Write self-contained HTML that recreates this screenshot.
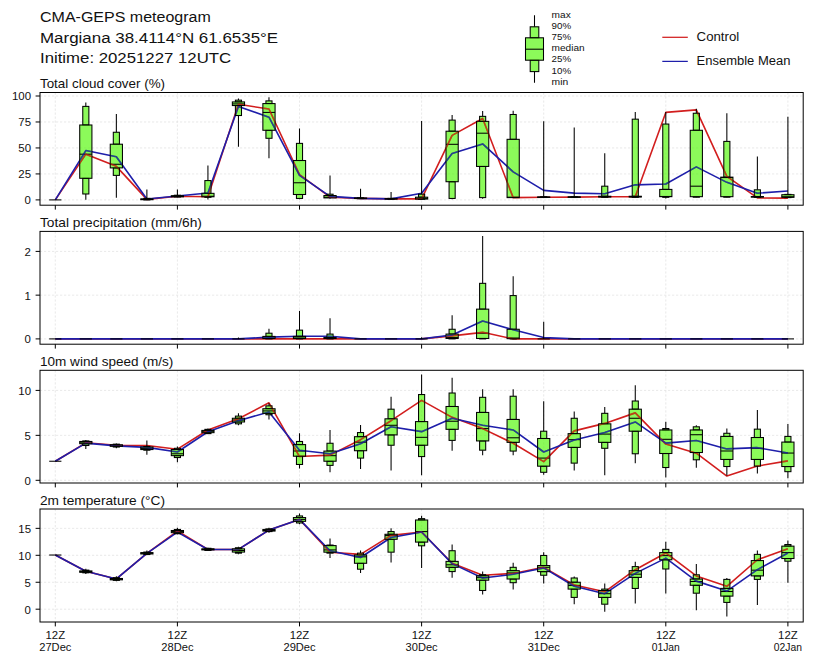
<!DOCTYPE html><html><head><meta charset="utf-8"><title>CMA-GEPS meteogram</title><style>html,body{margin:0;padding:0;background:#fff;width:814px;height:664px;overflow:hidden}svg{display:block}text{font-family:"Liberation Sans",sans-serif}</style></head><body>
<svg width="814" height="664" viewBox="0 0 814 664">
<rect width="814" height="664" fill="#fff"/>
<text x="40.00" y="22.40" font-size="15.47" textLength="170.79" lengthAdjust="spacingAndGlyphs" fill="#111">CMA-GEPS meteogram</text>
<text x="40.00" y="42.70" font-size="15.47" textLength="238.11" lengthAdjust="spacingAndGlyphs" fill="#111">Margiana 38.4114°N 61.6535°E</text>
<text x="40.00" y="63.00" font-size="15.47" textLength="191.11" lengthAdjust="spacingAndGlyphs" fill="#111">Initime: 20251227 12UTC</text>
<path d="M534.50 15.20V26.80M534.50 71.60V82.80" stroke="#000" stroke-opacity="1.0" stroke-width="1.05" fill="none"/><rect x="530.20" y="26.80" width="8.60" height="11.00" fill="#4ef802" fill-opacity="0.65" stroke="#000" stroke-opacity="1.0" stroke-width="1.05"/><rect x="530.20" y="60.20" width="8.60" height="11.40" fill="#4ef802" fill-opacity="0.65" stroke="#000" stroke-opacity="1.0" stroke-width="1.05"/><rect x="525.50" y="37.80" width="18.00" height="22.40" fill="#4ef802" fill-opacity="0.65" stroke="#000" stroke-opacity="1.0" stroke-width="1.05"/><path d="M525.50 49.20H543.50" stroke="#000" stroke-opacity="1.0" stroke-width="1.05"/>
<text x="551.60" y="17.90" font-size="9.11" textLength="19.14" lengthAdjust="spacingAndGlyphs" fill="#111">max</text>
<text x="551.60" y="29.02" font-size="9.11" textLength="19.56" lengthAdjust="spacingAndGlyphs" fill="#111">90%</text>
<text x="551.60" y="40.14" font-size="9.11" textLength="19.56" lengthAdjust="spacingAndGlyphs" fill="#111">75%</text>
<text x="551.60" y="51.26" font-size="9.11" textLength="33.00" lengthAdjust="spacingAndGlyphs" fill="#111">median</text>
<text x="551.60" y="62.38" font-size="9.11" textLength="19.56" lengthAdjust="spacingAndGlyphs" fill="#111">25%</text>
<text x="551.60" y="73.50" font-size="9.11" textLength="19.56" lengthAdjust="spacingAndGlyphs" fill="#111">10%</text>
<text x="551.60" y="84.62" font-size="9.11" textLength="16.62" lengthAdjust="spacingAndGlyphs" fill="#111">min</text>
<line x1="662.3" y1="37.3" x2="687.8" y2="37.3" stroke="#d21e1e" stroke-width="1.25"/>
<line x1="662.3" y1="61.4" x2="687.8" y2="61.4" stroke="#1e1eaa" stroke-width="1.25"/>
<text x="696.60" y="41.30" font-size="12.21" textLength="42.63" lengthAdjust="spacingAndGlyphs" fill="#111">Control</text>
<text x="696.60" y="65.30" font-size="12.21" textLength="93.76" lengthAdjust="spacingAndGlyphs" fill="#111">Ensemble Mean</text>
<g>
<g stroke="#e0e0e0" stroke-width="0.7" stroke-dasharray="2.2,1.8" fill="none">
<line x1="40.0" y1="199.90" x2="803.2" y2="199.90"/>
<line x1="40.0" y1="173.93" x2="803.2" y2="173.93"/>
<line x1="40.0" y1="147.95" x2="803.2" y2="147.95"/>
<line x1="40.0" y1="121.98" x2="803.2" y2="121.98"/>
<line x1="40.0" y1="96.00" x2="803.2" y2="96.00"/>
<line x1="55.30" y1="92.5" x2="55.30" y2="205.2"/>
<line x1="177.40" y1="92.5" x2="177.40" y2="205.2"/>
<line x1="299.50" y1="92.5" x2="299.50" y2="205.2"/>
<line x1="421.60" y1="92.5" x2="421.60" y2="205.2"/>
<line x1="543.70" y1="92.5" x2="543.70" y2="205.2"/>
<line x1="665.80" y1="92.5" x2="665.80" y2="205.2"/>
<line x1="787.90" y1="92.5" x2="787.90" y2="205.2"/>
</g>
<polyline points="55.30,199.90 85.82,154.18 116.35,166.34 146.88,199.38 177.40,196.26 207.93,196.78 238.45,104.31 268.97,108.99 299.50,174.65 330.02,197.20 360.55,198.34 391.07,198.86 421.60,198.86 452.12,135.38 482.65,118.44 513.17,197.61 543.70,197.20 574.22,197.09 604.75,196.68 635.27,196.68 665.80,112.42 696.32,109.92 726.85,176.31 757.37,197.93 787.90,198.13" fill="none" stroke="#d21e1e" stroke-opacity="1.0" stroke-width="1.6" stroke-linejoin="round"/>
<polyline points="55.30,199.90 85.82,150.55 116.35,156.68 146.88,199.07 177.40,195.95 207.93,193.04 238.45,106.49 268.97,117.20 299.50,175.38 330.02,196.37 360.55,198.34 391.07,198.86 421.60,193.25 452.12,153.56 482.65,143.90 513.17,171.85 543.70,190.34 574.22,193.15 604.75,193.77 635.27,184.83 665.80,184.00 696.32,166.86 726.85,182.34 757.37,193.25 787.90,191.07" fill="none" stroke="#1e1eaa" stroke-opacity="1.0" stroke-width="1.6" stroke-linejoin="round"/>
<path d="M55.30 199.90V199.90M55.30 199.90V199.90" stroke="#000" stroke-opacity="1.0" stroke-width="1.05" fill="none"/><rect x="52.25" y="199.90" width="6.10" height="0.00" fill="#4ef802" fill-opacity="0.65" stroke="#000" stroke-opacity="1.0" stroke-width="1.05"/><rect x="52.25" y="199.90" width="6.10" height="0.00" fill="#4ef802" fill-opacity="0.65" stroke="#000" stroke-opacity="1.0" stroke-width="1.05"/><rect x="49.20" y="199.90" width="12.20" height="0.00" fill="#4ef802" fill-opacity="0.65" stroke="#000" stroke-opacity="1.0" stroke-width="1.05"/><path d="M49.20 199.90H61.40" stroke="#000" stroke-opacity="1.0" stroke-width="1.05"/>
<path d="M85.82 102.55V106.39M85.82 193.98V199.80" stroke="#000" stroke-opacity="1.0" stroke-width="1.05" fill="none"/><rect x="82.77" y="106.39" width="6.10" height="18.60" fill="#4ef802" fill-opacity="0.65" stroke="#000" stroke-opacity="1.0" stroke-width="1.05"/><rect x="82.77" y="178.29" width="6.10" height="15.69" fill="#4ef802" fill-opacity="0.65" stroke="#000" stroke-opacity="1.0" stroke-width="1.05"/><rect x="79.72" y="124.99" width="12.20" height="53.30" fill="#4ef802" fill-opacity="0.65" stroke="#000" stroke-opacity="1.0" stroke-width="1.05"/><path d="M79.72 154.18H91.92" stroke="#000" stroke-opacity="1.0" stroke-width="1.05"/>
<path d="M116.35 114.08V132.26M116.35 175.38V197.82" stroke="#000" stroke-opacity="1.0" stroke-width="1.05" fill="none"/><rect x="113.30" y="132.26" width="6.10" height="11.95" fill="#4ef802" fill-opacity="0.65" stroke="#000" stroke-opacity="1.0" stroke-width="1.05"/><rect x="113.30" y="167.90" width="6.10" height="7.48" fill="#4ef802" fill-opacity="0.65" stroke="#000" stroke-opacity="1.0" stroke-width="1.05"/><rect x="110.25" y="144.21" width="12.20" height="23.69" fill="#4ef802" fill-opacity="0.65" stroke="#000" stroke-opacity="1.0" stroke-width="1.05"/><path d="M110.25 164.26H122.45" stroke="#000" stroke-opacity="1.0" stroke-width="1.05"/>
<path d="M146.88 189.41V198.34M146.88 199.90V199.90" stroke="#000" stroke-opacity="1.0" stroke-width="1.05" fill="none"/><rect x="143.82" y="198.34" width="6.10" height="0.52" fill="#4ef802" fill-opacity="0.65" stroke="#000" stroke-opacity="1.0" stroke-width="1.05"/><rect x="143.82" y="199.69" width="6.10" height="0.21" fill="#4ef802" fill-opacity="0.65" stroke="#000" stroke-opacity="1.0" stroke-width="1.05"/><rect x="140.78" y="198.86" width="12.20" height="0.83" fill="#4ef802" fill-opacity="0.65" stroke="#000" stroke-opacity="1.0" stroke-width="1.05"/><path d="M140.78 199.38H152.97" stroke="#000" stroke-opacity="1.0" stroke-width="1.05"/>
<path d="M177.40 189.51V195.22M177.40 196.99V197.30" stroke="#000" stroke-opacity="1.0" stroke-width="1.05" fill="none"/><rect x="174.35" y="195.22" width="6.10" height="0.52" fill="#4ef802" fill-opacity="0.65" stroke="#000" stroke-opacity="1.0" stroke-width="1.05"/><rect x="174.35" y="196.78" width="6.10" height="0.21" fill="#4ef802" fill-opacity="0.65" stroke="#000" stroke-opacity="1.0" stroke-width="1.05"/><rect x="171.30" y="195.74" width="12.20" height="1.04" fill="#4ef802" fill-opacity="0.65" stroke="#000" stroke-opacity="1.0" stroke-width="1.05"/><path d="M171.30 196.26H183.50" stroke="#000" stroke-opacity="1.0" stroke-width="1.05"/>
<path d="M207.93 165.51V180.57M207.93 197.30V199.38" stroke="#000" stroke-opacity="1.0" stroke-width="1.05" fill="none"/><rect x="204.88" y="180.57" width="6.10" height="12.78" fill="#4ef802" fill-opacity="0.65" stroke="#000" stroke-opacity="1.0" stroke-width="1.05"/><rect x="204.88" y="196.78" width="6.10" height="0.52" fill="#4ef802" fill-opacity="0.65" stroke="#000" stroke-opacity="1.0" stroke-width="1.05"/><rect x="201.83" y="193.35" width="12.20" height="3.43" fill="#4ef802" fill-opacity="0.65" stroke="#000" stroke-opacity="1.0" stroke-width="1.05"/><path d="M201.83 196.26H214.03" stroke="#000" stroke-opacity="1.0" stroke-width="1.05"/>
<path d="M238.45 98.49V100.16M238.45 115.53V146.81" stroke="#000" stroke-opacity="1.0" stroke-width="1.05" fill="none"/><rect x="235.40" y="100.16" width="6.10" height="1.77" fill="#4ef802" fill-opacity="0.65" stroke="#000" stroke-opacity="1.0" stroke-width="1.05"/><rect x="235.40" y="105.56" width="6.10" height="9.97" fill="#4ef802" fill-opacity="0.65" stroke="#000" stroke-opacity="1.0" stroke-width="1.05"/><rect x="232.35" y="101.92" width="12.20" height="3.64" fill="#4ef802" fill-opacity="0.65" stroke="#000" stroke-opacity="1.0" stroke-width="1.05"/><path d="M232.35 103.90H244.55" stroke="#000" stroke-opacity="1.0" stroke-width="1.05"/>
<path d="M268.97 97.14V100.88M268.97 138.29V158.13" stroke="#000" stroke-opacity="1.0" stroke-width="1.05" fill="none"/><rect x="265.92" y="100.88" width="6.10" height="2.70" fill="#4ef802" fill-opacity="0.65" stroke="#000" stroke-opacity="1.0" stroke-width="1.05"/><rect x="265.92" y="130.29" width="6.10" height="8.00" fill="#4ef802" fill-opacity="0.65" stroke="#000" stroke-opacity="1.0" stroke-width="1.05"/><rect x="262.87" y="103.58" width="12.20" height="26.70" fill="#4ef802" fill-opacity="0.65" stroke="#000" stroke-opacity="1.0" stroke-width="1.05"/><path d="M262.87 112.42H275.07" stroke="#000" stroke-opacity="1.0" stroke-width="1.05"/>
<path d="M299.50 128.62V143.38M299.50 198.45V199.28" stroke="#000" stroke-opacity="1.0" stroke-width="1.05" fill="none"/><rect x="296.45" y="143.38" width="6.10" height="17.14" fill="#4ef802" fill-opacity="0.65" stroke="#000" stroke-opacity="1.0" stroke-width="1.05"/><rect x="296.45" y="194.50" width="6.10" height="3.95" fill="#4ef802" fill-opacity="0.65" stroke="#000" stroke-opacity="1.0" stroke-width="1.05"/><rect x="293.40" y="160.52" width="12.20" height="33.98" fill="#4ef802" fill-opacity="0.65" stroke="#000" stroke-opacity="1.0" stroke-width="1.05"/><path d="M293.40 182.76H305.60" stroke="#000" stroke-opacity="1.0" stroke-width="1.05"/>
<path d="M330.02 175.38V194.19M330.02 197.93V198.86" stroke="#000" stroke-opacity="1.0" stroke-width="1.05" fill="none"/><rect x="326.97" y="194.19" width="6.10" height="1.35" fill="#4ef802" fill-opacity="0.65" stroke="#000" stroke-opacity="1.0" stroke-width="1.05"/><rect x="326.97" y="197.93" width="6.10" height="0.00" fill="#4ef802" fill-opacity="0.65" stroke="#000" stroke-opacity="1.0" stroke-width="1.05"/><rect x="323.92" y="195.54" width="12.20" height="2.39" fill="#4ef802" fill-opacity="0.65" stroke="#000" stroke-opacity="1.0" stroke-width="1.05"/><path d="M323.92 197.30H336.12" stroke="#000" stroke-opacity="1.0" stroke-width="1.05"/>
<path d="M360.55 188.68V197.82M360.55 198.65V198.86" stroke="#000" stroke-opacity="1.0" stroke-width="1.05" fill="none"/><rect x="357.50" y="197.82" width="6.10" height="0.21" fill="#4ef802" fill-opacity="0.65" stroke="#000" stroke-opacity="1.0" stroke-width="1.05"/><rect x="357.50" y="198.55" width="6.10" height="0.10" fill="#4ef802" fill-opacity="0.65" stroke="#000" stroke-opacity="1.0" stroke-width="1.05"/><rect x="354.45" y="198.03" width="12.20" height="0.52" fill="#4ef802" fill-opacity="0.65" stroke="#000" stroke-opacity="1.0" stroke-width="1.05"/><path d="M354.45 198.34H366.65" stroke="#000" stroke-opacity="1.0" stroke-width="1.05"/>
<path d="M391.07 192.11V198.34M391.07 199.07V199.38" stroke="#000" stroke-opacity="1.0" stroke-width="1.05" fill="none"/><rect x="388.02" y="198.34" width="6.10" height="0.31" fill="#4ef802" fill-opacity="0.65" stroke="#000" stroke-opacity="1.0" stroke-width="1.05"/><rect x="388.02" y="198.96" width="6.10" height="0.10" fill="#4ef802" fill-opacity="0.65" stroke="#000" stroke-opacity="1.0" stroke-width="1.05"/><rect x="384.97" y="198.65" width="12.20" height="0.31" fill="#4ef802" fill-opacity="0.65" stroke="#000" stroke-opacity="1.0" stroke-width="1.05"/><path d="M384.97 198.86H397.18" stroke="#000" stroke-opacity="1.0" stroke-width="1.05"/>
<path d="M421.60 121.04V194.19M421.60 199.28V199.28" stroke="#000" stroke-opacity="1.0" stroke-width="1.05" fill="none"/><rect x="418.55" y="194.19" width="6.10" height="3.01" fill="#4ef802" fill-opacity="0.65" stroke="#000" stroke-opacity="1.0" stroke-width="1.05"/><rect x="418.55" y="199.07" width="6.10" height="0.21" fill="#4ef802" fill-opacity="0.65" stroke="#000" stroke-opacity="1.0" stroke-width="1.05"/><rect x="415.50" y="197.20" width="12.20" height="1.87" fill="#4ef802" fill-opacity="0.65" stroke="#000" stroke-opacity="1.0" stroke-width="1.05"/><path d="M415.50 198.34H427.70" stroke="#000" stroke-opacity="1.0" stroke-width="1.05"/>
<path d="M452.12 115.01V120.10M452.12 198.45V199.28" stroke="#000" stroke-opacity="1.0" stroke-width="1.05" fill="none"/><rect x="449.07" y="120.10" width="6.10" height="11.12" fill="#4ef802" fill-opacity="0.65" stroke="#000" stroke-opacity="1.0" stroke-width="1.05"/><rect x="449.07" y="181.72" width="6.10" height="16.73" fill="#4ef802" fill-opacity="0.65" stroke="#000" stroke-opacity="1.0" stroke-width="1.05"/><rect x="446.02" y="131.22" width="12.20" height="50.50" fill="#4ef802" fill-opacity="0.65" stroke="#000" stroke-opacity="1.0" stroke-width="1.05"/><path d="M446.02 144.31H458.23" stroke="#000" stroke-opacity="1.0" stroke-width="1.05"/>
<path d="M482.65 111.07V116.36M482.65 197.61V198.86" stroke="#000" stroke-opacity="1.0" stroke-width="1.05" fill="none"/><rect x="479.60" y="116.36" width="6.10" height="4.99" fill="#4ef802" fill-opacity="0.65" stroke="#000" stroke-opacity="1.0" stroke-width="1.05"/><rect x="479.60" y="166.44" width="6.10" height="31.17" fill="#4ef802" fill-opacity="0.65" stroke="#000" stroke-opacity="1.0" stroke-width="1.05"/><rect x="476.55" y="121.35" width="12.20" height="45.09" fill="#4ef802" fill-opacity="0.65" stroke="#000" stroke-opacity="1.0" stroke-width="1.05"/><path d="M476.55 133.20H488.75" stroke="#000" stroke-opacity="1.0" stroke-width="1.05"/>
<path d="M513.17 110.65V114.49M513.17 197.61V197.93" stroke="#000" stroke-opacity="1.0" stroke-width="1.05" fill="none"/><rect x="510.12" y="114.49" width="6.10" height="24.83" fill="#4ef802" fill-opacity="0.65" stroke="#000" stroke-opacity="1.0" stroke-width="1.05"/><rect x="510.12" y="197.61" width="6.10" height="0.00" fill="#4ef802" fill-opacity="0.65" stroke="#000" stroke-opacity="1.0" stroke-width="1.05"/><rect x="507.07" y="139.33" width="12.20" height="58.29" fill="#4ef802" fill-opacity="0.65" stroke="#000" stroke-opacity="1.0" stroke-width="1.05"/><path d="M507.07 197.20H519.27" stroke="#000" stroke-opacity="1.0" stroke-width="1.05"/>
<path d="M543.70 121.35V196.78M543.70 197.51V197.82" stroke="#000" stroke-opacity="1.0" stroke-width="1.05" fill="none"/><rect x="540.65" y="196.78" width="6.10" height="0.21" fill="#4ef802" fill-opacity="0.65" stroke="#000" stroke-opacity="1.0" stroke-width="1.05"/><rect x="540.65" y="197.41" width="6.10" height="0.10" fill="#4ef802" fill-opacity="0.65" stroke="#000" stroke-opacity="1.0" stroke-width="1.05"/><rect x="537.60" y="196.99" width="12.20" height="0.42" fill="#4ef802" fill-opacity="0.65" stroke="#000" stroke-opacity="1.0" stroke-width="1.05"/><path d="M537.60 197.20H549.80" stroke="#000" stroke-opacity="1.0" stroke-width="1.05"/>
<path d="M574.22 127.38V196.68M574.22 197.51V197.82" stroke="#000" stroke-opacity="1.0" stroke-width="1.05" fill="none"/><rect x="571.17" y="196.68" width="6.10" height="0.21" fill="#4ef802" fill-opacity="0.65" stroke="#000" stroke-opacity="1.0" stroke-width="1.05"/><rect x="571.17" y="197.30" width="6.10" height="0.21" fill="#4ef802" fill-opacity="0.65" stroke="#000" stroke-opacity="1.0" stroke-width="1.05"/><rect x="568.12" y="196.89" width="12.20" height="0.42" fill="#4ef802" fill-opacity="0.65" stroke="#000" stroke-opacity="1.0" stroke-width="1.05"/><path d="M568.12 197.09H580.32" stroke="#000" stroke-opacity="1.0" stroke-width="1.05"/>
<path d="M604.75 153.25V186.19M604.75 197.30V197.61" stroke="#000" stroke-opacity="1.0" stroke-width="1.05" fill="none"/><rect x="601.70" y="186.19" width="6.10" height="10.08" fill="#4ef802" fill-opacity="0.65" stroke="#000" stroke-opacity="1.0" stroke-width="1.05"/><rect x="601.70" y="196.99" width="6.10" height="0.31" fill="#4ef802" fill-opacity="0.65" stroke="#000" stroke-opacity="1.0" stroke-width="1.05"/><rect x="598.65" y="196.26" width="12.20" height="0.73" fill="#4ef802" fill-opacity="0.65" stroke="#000" stroke-opacity="1.0" stroke-width="1.05"/><path d="M598.65 196.68H610.85" stroke="#000" stroke-opacity="1.0" stroke-width="1.05"/>
<path d="M635.27 112.10V119.17M635.27 197.30V197.61" stroke="#000" stroke-opacity="1.0" stroke-width="1.05" fill="none"/><rect x="632.23" y="119.17" width="6.10" height="77.09" fill="#4ef802" fill-opacity="0.65" stroke="#000" stroke-opacity="1.0" stroke-width="1.05"/><rect x="632.23" y="196.99" width="6.10" height="0.31" fill="#4ef802" fill-opacity="0.65" stroke="#000" stroke-opacity="1.0" stroke-width="1.05"/><rect x="629.17" y="196.26" width="12.20" height="0.73" fill="#4ef802" fill-opacity="0.65" stroke="#000" stroke-opacity="1.0" stroke-width="1.05"/><path d="M629.17 196.68H641.38" stroke="#000" stroke-opacity="1.0" stroke-width="1.05"/>
<path d="M665.80 112.10V124.05M665.80 197.30V198.45" stroke="#000" stroke-opacity="1.0" stroke-width="1.05" fill="none"/><rect x="662.75" y="124.05" width="6.10" height="65.35" fill="#4ef802" fill-opacity="0.65" stroke="#000" stroke-opacity="1.0" stroke-width="1.05"/><rect x="662.75" y="196.68" width="6.10" height="0.62" fill="#4ef802" fill-opacity="0.65" stroke="#000" stroke-opacity="1.0" stroke-width="1.05"/><rect x="659.70" y="189.41" width="12.20" height="7.27" fill="#4ef802" fill-opacity="0.65" stroke="#000" stroke-opacity="1.0" stroke-width="1.05"/><path d="M659.70 196.47H671.90" stroke="#000" stroke-opacity="1.0" stroke-width="1.05"/>
<path d="M696.32 108.68V113.25M696.32 197.20V197.61" stroke="#000" stroke-opacity="1.0" stroke-width="1.05" fill="none"/><rect x="693.27" y="113.25" width="6.10" height="17.04" fill="#4ef802" fill-opacity="0.65" stroke="#000" stroke-opacity="1.0" stroke-width="1.05"/><rect x="693.27" y="196.68" width="6.10" height="0.52" fill="#4ef802" fill-opacity="0.65" stroke="#000" stroke-opacity="1.0" stroke-width="1.05"/><rect x="690.22" y="130.29" width="12.20" height="66.39" fill="#4ef802" fill-opacity="0.65" stroke="#000" stroke-opacity="1.0" stroke-width="1.05"/><path d="M690.22 186.19H702.42" stroke="#000" stroke-opacity="1.0" stroke-width="1.05"/>
<path d="M726.85 113.25V141.40M726.85 197.20V197.61" stroke="#000" stroke-opacity="1.0" stroke-width="1.05" fill="none"/><rect x="723.80" y="141.40" width="6.10" height="35.74" fill="#4ef802" fill-opacity="0.65" stroke="#000" stroke-opacity="1.0" stroke-width="1.05"/><rect x="723.80" y="196.68" width="6.10" height="0.52" fill="#4ef802" fill-opacity="0.65" stroke="#000" stroke-opacity="1.0" stroke-width="1.05"/><rect x="720.75" y="177.15" width="12.20" height="19.53" fill="#4ef802" fill-opacity="0.65" stroke="#000" stroke-opacity="1.0" stroke-width="1.05"/><path d="M720.75 177.56H732.95" stroke="#000" stroke-opacity="1.0" stroke-width="1.05"/>
<path d="M757.37 156.47V189.82M757.37 197.30V197.61" stroke="#000" stroke-opacity="1.0" stroke-width="1.05" fill="none"/><rect x="754.32" y="189.82" width="6.10" height="6.75" fill="#4ef802" fill-opacity="0.65" stroke="#000" stroke-opacity="1.0" stroke-width="1.05"/><rect x="754.32" y="197.09" width="6.10" height="0.21" fill="#4ef802" fill-opacity="0.65" stroke="#000" stroke-opacity="1.0" stroke-width="1.05"/><rect x="751.27" y="196.58" width="12.20" height="0.52" fill="#4ef802" fill-opacity="0.65" stroke="#000" stroke-opacity="1.0" stroke-width="1.05"/><path d="M751.27 196.78H763.47" stroke="#000" stroke-opacity="1.0" stroke-width="1.05"/>
<path d="M787.90 116.68V194.39M787.90 197.61V197.82" stroke="#000" stroke-opacity="1.0" stroke-width="1.05" fill="none"/><rect x="784.85" y="194.39" width="6.10" height="0.31" fill="#4ef802" fill-opacity="0.65" stroke="#000" stroke-opacity="1.0" stroke-width="1.05"/><rect x="784.85" y="197.30" width="6.10" height="0.31" fill="#4ef802" fill-opacity="0.65" stroke="#000" stroke-opacity="1.0" stroke-width="1.05"/><rect x="781.80" y="194.71" width="12.20" height="2.60" fill="#4ef802" fill-opacity="0.65" stroke="#000" stroke-opacity="1.0" stroke-width="1.05"/><path d="M781.80 196.78H794.00" stroke="#000" stroke-opacity="1.0" stroke-width="1.05"/>
<clipPath id="cp0"><rect x="80.22" y="125.49" width="11.20" height="52.30"/><rect x="83.27" y="106.89" width="5.10" height="17.60"/><rect x="83.27" y="178.79" width="5.10" height="14.69"/><rect x="110.75" y="144.71" width="11.20" height="22.69"/><rect x="113.80" y="132.76" width="5.10" height="10.95"/><rect x="113.80" y="168.40" width="5.10" height="6.48"/><rect x="202.33" y="193.85" width="11.20" height="2.43"/><rect x="205.38" y="181.07" width="5.10" height="11.78"/><rect x="232.85" y="102.42" width="11.20" height="2.64"/><rect x="235.90" y="100.66" width="5.10" height="0.77"/><rect x="235.90" y="106.06" width="5.10" height="8.97"/><rect x="263.37" y="104.08" width="11.20" height="25.70"/><rect x="266.42" y="101.38" width="5.10" height="1.70"/><rect x="266.42" y="130.79" width="5.10" height="7.00"/><rect x="293.90" y="161.02" width="11.20" height="32.98"/><rect x="296.95" y="143.88" width="5.10" height="16.14"/><rect x="296.95" y="195.00" width="5.10" height="2.95"/><rect x="324.42" y="196.04" width="11.20" height="1.39"/><rect x="416.00" y="197.70" width="11.20" height="0.87"/><rect x="419.05" y="194.69" width="5.10" height="2.01"/><rect x="446.52" y="131.72" width="11.20" height="49.50"/><rect x="449.57" y="120.60" width="5.10" height="10.12"/><rect x="449.57" y="182.22" width="5.10" height="15.73"/><rect x="477.05" y="121.85" width="11.20" height="44.09"/><rect x="480.10" y="116.86" width="5.10" height="3.99"/><rect x="480.10" y="166.94" width="5.10" height="30.17"/><rect x="507.57" y="139.83" width="11.20" height="57.29"/><rect x="510.62" y="114.99" width="5.10" height="23.83"/><rect x="602.20" y="186.69" width="5.10" height="9.08"/><rect x="632.73" y="119.67" width="5.10" height="76.09"/><rect x="660.20" y="189.91" width="11.20" height="6.27"/><rect x="663.25" y="124.55" width="5.10" height="64.35"/><rect x="690.72" y="130.79" width="11.20" height="65.39"/><rect x="693.77" y="113.75" width="5.10" height="16.04"/><rect x="721.25" y="177.65" width="11.20" height="18.53"/><rect x="724.30" y="141.90" width="5.10" height="34.74"/><rect x="754.82" y="190.32" width="5.10" height="5.75"/><rect x="782.30" y="195.21" width="11.20" height="1.60"/></clipPath>
<g clip-path="url(#cp0)">
<polyline points="55.30,199.90 85.82,154.18 116.35,166.34 146.88,199.38 177.40,196.26 207.93,196.78 238.45,104.31 268.97,108.99 299.50,174.65 330.02,197.20 360.55,198.34 391.07,198.86 421.60,198.86 452.12,135.38 482.65,118.44 513.17,197.61 543.70,197.20 574.22,197.09 604.75,196.68 635.27,196.68 665.80,112.42 696.32,109.92 726.85,176.31 757.37,197.93 787.90,198.13" fill="none" stroke="#d21e1e" stroke-opacity="0.75" stroke-width="1.6" stroke-linejoin="round"/>
<polyline points="55.30,199.90 85.82,150.55 116.35,156.68 146.88,199.07 177.40,195.95 207.93,193.04 238.45,106.49 268.97,117.20 299.50,175.38 330.02,196.37 360.55,198.34 391.07,198.86 421.60,193.25 452.12,153.56 482.65,143.90 513.17,171.85 543.70,190.34 574.22,193.15 604.75,193.77 635.27,184.83 665.80,184.00 696.32,166.86 726.85,182.34 757.37,193.25 787.90,191.07" fill="none" stroke="#1e1eaa" stroke-opacity="0.75" stroke-width="1.6" stroke-linejoin="round"/>
</g>
<rect x="40.0" y="92.5" width="763.20" height="112.70" fill="none" stroke="#000" stroke-width="1"/>
<line x1="35.60" y1="199.90" x2="40.0" y2="199.90" stroke="#000" stroke-width="1"/>
<text x="24.64" y="204.30" font-size="10.35" textLength="6.36" lengthAdjust="spacingAndGlyphs" fill="#111">0</text>
<line x1="35.60" y1="173.93" x2="40.0" y2="173.93" stroke="#000" stroke-width="1"/>
<text x="18.27" y="178.33" font-size="10.35" textLength="12.76" lengthAdjust="spacingAndGlyphs" fill="#111">25</text>
<line x1="35.60" y1="147.95" x2="40.0" y2="147.95" stroke="#000" stroke-width="1"/>
<text x="18.27" y="152.35" font-size="10.35" textLength="12.76" lengthAdjust="spacingAndGlyphs" fill="#111">50</text>
<line x1="35.60" y1="121.98" x2="40.0" y2="121.98" stroke="#000" stroke-width="1"/>
<text x="18.27" y="126.38" font-size="10.35" textLength="12.76" lengthAdjust="spacingAndGlyphs" fill="#111">75</text>
<line x1="35.60" y1="96.00" x2="40.0" y2="96.00" stroke="#000" stroke-width="1"/>
<text x="11.91" y="100.40" font-size="10.35" textLength="19.12" lengthAdjust="spacingAndGlyphs" fill="#111">100</text>
<line x1="55.30" y1="205.2" x2="55.30" y2="209.60" stroke="#000" stroke-width="1"/>
<line x1="177.40" y1="205.2" x2="177.40" y2="209.60" stroke="#000" stroke-width="1"/>
<line x1="299.50" y1="205.2" x2="299.50" y2="209.60" stroke="#000" stroke-width="1"/>
<line x1="421.60" y1="205.2" x2="421.60" y2="209.60" stroke="#000" stroke-width="1"/>
<line x1="543.70" y1="205.2" x2="543.70" y2="209.60" stroke="#000" stroke-width="1"/>
<line x1="665.80" y1="205.2" x2="665.80" y2="209.60" stroke="#000" stroke-width="1"/>
<line x1="787.90" y1="205.2" x2="787.90" y2="209.60" stroke="#000" stroke-width="1"/>
<text x="39.95" y="87.80" font-size="12.32" textLength="125.09" lengthAdjust="spacingAndGlyphs" fill="#111">Total cloud cover (%)</text>
</g>
<g>
<g stroke="#e0e0e0" stroke-width="0.7" stroke-dasharray="2.2,1.8" fill="none">
<line x1="40.0" y1="338.90" x2="803.2" y2="338.90"/>
<line x1="40.0" y1="295.15" x2="803.2" y2="295.15"/>
<line x1="40.0" y1="251.40" x2="803.2" y2="251.40"/>
<line x1="55.30" y1="231.4" x2="55.30" y2="344.2"/>
<line x1="177.40" y1="231.4" x2="177.40" y2="344.2"/>
<line x1="299.50" y1="231.4" x2="299.50" y2="344.2"/>
<line x1="421.60" y1="231.4" x2="421.60" y2="344.2"/>
<line x1="543.70" y1="231.4" x2="543.70" y2="344.2"/>
<line x1="665.80" y1="231.4" x2="665.80" y2="344.2"/>
<line x1="787.90" y1="231.4" x2="787.90" y2="344.2"/>
</g>
<polyline points="55.30,338.90 85.82,338.90 116.35,338.90 146.88,338.90 177.40,338.90 207.93,338.90 238.45,338.90 268.97,338.90 299.50,338.90 330.02,338.90 360.55,338.90 391.07,338.90 421.60,338.90 452.12,335.84 482.65,332.34 513.17,338.90 543.70,338.90 574.22,338.90 604.75,338.90 635.27,338.90 665.80,338.90 696.32,338.90 726.85,338.90 757.37,338.90 787.90,338.90" fill="none" stroke="#d21e1e" stroke-opacity="1.0" stroke-width="1.6" stroke-linejoin="round"/>
<polyline points="55.30,338.90 85.82,338.90 116.35,338.90 146.88,338.90 177.40,338.90 207.93,338.90 238.45,338.90 268.97,337.15 299.50,336.27 330.02,336.27 360.55,338.90 391.07,338.90 421.60,338.90 452.12,334.96 482.65,320.96 513.17,329.71 543.70,337.59 574.22,338.90 604.75,338.90 635.27,338.90 665.80,338.90 696.32,338.90 726.85,338.90 757.37,338.90 787.90,338.90" fill="none" stroke="#1e1eaa" stroke-opacity="1.0" stroke-width="1.6" stroke-linejoin="round"/>
<path d="M55.30 338.90V338.90M55.30 338.90V338.90" stroke="#000" stroke-opacity="1.0" stroke-width="1.05" fill="none"/><rect x="52.25" y="338.90" width="6.10" height="0.00" fill="#4ef802" fill-opacity="0.65" stroke="#000" stroke-opacity="1.0" stroke-width="1.05"/><rect x="52.25" y="338.90" width="6.10" height="0.00" fill="#4ef802" fill-opacity="0.65" stroke="#000" stroke-opacity="1.0" stroke-width="1.05"/><rect x="49.20" y="338.90" width="12.20" height="0.00" fill="#4ef802" fill-opacity="0.65" stroke="#000" stroke-opacity="1.0" stroke-width="1.05"/><path d="M49.20 338.90H61.40" stroke="#000" stroke-opacity="1.0" stroke-width="1.05"/>
<path d="M85.82 338.90V338.90M85.82 338.90V338.90" stroke="#000" stroke-opacity="1.0" stroke-width="1.05" fill="none"/><rect x="82.77" y="338.90" width="6.10" height="0.00" fill="#4ef802" fill-opacity="0.65" stroke="#000" stroke-opacity="1.0" stroke-width="1.05"/><rect x="82.77" y="338.90" width="6.10" height="0.00" fill="#4ef802" fill-opacity="0.65" stroke="#000" stroke-opacity="1.0" stroke-width="1.05"/><rect x="79.72" y="338.90" width="12.20" height="0.00" fill="#4ef802" fill-opacity="0.65" stroke="#000" stroke-opacity="1.0" stroke-width="1.05"/><path d="M79.72 338.90H91.92" stroke="#000" stroke-opacity="1.0" stroke-width="1.05"/>
<path d="M116.35 338.90V338.90M116.35 338.90V338.90" stroke="#000" stroke-opacity="1.0" stroke-width="1.05" fill="none"/><rect x="113.30" y="338.90" width="6.10" height="0.00" fill="#4ef802" fill-opacity="0.65" stroke="#000" stroke-opacity="1.0" stroke-width="1.05"/><rect x="113.30" y="338.90" width="6.10" height="0.00" fill="#4ef802" fill-opacity="0.65" stroke="#000" stroke-opacity="1.0" stroke-width="1.05"/><rect x="110.25" y="338.90" width="12.20" height="0.00" fill="#4ef802" fill-opacity="0.65" stroke="#000" stroke-opacity="1.0" stroke-width="1.05"/><path d="M110.25 338.90H122.45" stroke="#000" stroke-opacity="1.0" stroke-width="1.05"/>
<path d="M146.88 338.90V338.90M146.88 338.90V338.90" stroke="#000" stroke-opacity="1.0" stroke-width="1.05" fill="none"/><rect x="143.82" y="338.90" width="6.10" height="0.00" fill="#4ef802" fill-opacity="0.65" stroke="#000" stroke-opacity="1.0" stroke-width="1.05"/><rect x="143.82" y="338.90" width="6.10" height="0.00" fill="#4ef802" fill-opacity="0.65" stroke="#000" stroke-opacity="1.0" stroke-width="1.05"/><rect x="140.78" y="338.90" width="12.20" height="0.00" fill="#4ef802" fill-opacity="0.65" stroke="#000" stroke-opacity="1.0" stroke-width="1.05"/><path d="M140.78 338.90H152.97" stroke="#000" stroke-opacity="1.0" stroke-width="1.05"/>
<path d="M177.40 338.90V338.90M177.40 338.90V338.90" stroke="#000" stroke-opacity="1.0" stroke-width="1.05" fill="none"/><rect x="174.35" y="338.90" width="6.10" height="0.00" fill="#4ef802" fill-opacity="0.65" stroke="#000" stroke-opacity="1.0" stroke-width="1.05"/><rect x="174.35" y="338.90" width="6.10" height="0.00" fill="#4ef802" fill-opacity="0.65" stroke="#000" stroke-opacity="1.0" stroke-width="1.05"/><rect x="171.30" y="338.90" width="12.20" height="0.00" fill="#4ef802" fill-opacity="0.65" stroke="#000" stroke-opacity="1.0" stroke-width="1.05"/><path d="M171.30 338.90H183.50" stroke="#000" stroke-opacity="1.0" stroke-width="1.05"/>
<path d="M207.93 338.90V338.90M207.93 338.90V338.90" stroke="#000" stroke-opacity="1.0" stroke-width="1.05" fill="none"/><rect x="204.88" y="338.90" width="6.10" height="0.00" fill="#4ef802" fill-opacity="0.65" stroke="#000" stroke-opacity="1.0" stroke-width="1.05"/><rect x="204.88" y="338.90" width="6.10" height="0.00" fill="#4ef802" fill-opacity="0.65" stroke="#000" stroke-opacity="1.0" stroke-width="1.05"/><rect x="201.83" y="338.90" width="12.20" height="0.00" fill="#4ef802" fill-opacity="0.65" stroke="#000" stroke-opacity="1.0" stroke-width="1.05"/><path d="M201.83 338.90H214.03" stroke="#000" stroke-opacity="1.0" stroke-width="1.05"/>
<path d="M238.45 337.59V338.90M238.45 338.90V338.90" stroke="#000" stroke-opacity="1.0" stroke-width="1.05" fill="none"/><rect x="235.40" y="338.90" width="6.10" height="0.00" fill="#4ef802" fill-opacity="0.65" stroke="#000" stroke-opacity="1.0" stroke-width="1.05"/><rect x="235.40" y="338.90" width="6.10" height="0.00" fill="#4ef802" fill-opacity="0.65" stroke="#000" stroke-opacity="1.0" stroke-width="1.05"/><rect x="232.35" y="338.90" width="12.20" height="0.00" fill="#4ef802" fill-opacity="0.65" stroke="#000" stroke-opacity="1.0" stroke-width="1.05"/><path d="M232.35 338.90H244.55" stroke="#000" stroke-opacity="1.0" stroke-width="1.05"/>
<path d="M268.97 328.84V333.21M268.97 338.90V338.90" stroke="#000" stroke-opacity="1.0" stroke-width="1.05" fill="none"/><rect x="265.92" y="333.21" width="6.10" height="3.19" fill="#4ef802" fill-opacity="0.65" stroke="#000" stroke-opacity="1.0" stroke-width="1.05"/><rect x="265.92" y="338.46" width="6.10" height="0.44" fill="#4ef802" fill-opacity="0.65" stroke="#000" stroke-opacity="1.0" stroke-width="1.05"/><rect x="262.87" y="336.41" width="12.20" height="2.06" fill="#4ef802" fill-opacity="0.65" stroke="#000" stroke-opacity="1.0" stroke-width="1.05"/><path d="M262.87 338.02H275.07" stroke="#000" stroke-opacity="1.0" stroke-width="1.05"/>
<path d="M299.50 310.90V330.15M299.50 338.90V338.90" stroke="#000" stroke-opacity="1.0" stroke-width="1.05" fill="none"/><rect x="296.45" y="330.15" width="6.10" height="6.26" fill="#4ef802" fill-opacity="0.65" stroke="#000" stroke-opacity="1.0" stroke-width="1.05"/><rect x="296.45" y="338.46" width="6.10" height="0.44" fill="#4ef802" fill-opacity="0.65" stroke="#000" stroke-opacity="1.0" stroke-width="1.05"/><rect x="293.40" y="336.41" width="12.20" height="2.06" fill="#4ef802" fill-opacity="0.65" stroke="#000" stroke-opacity="1.0" stroke-width="1.05"/><path d="M293.40 338.02H305.60" stroke="#000" stroke-opacity="1.0" stroke-width="1.05"/>
<path d="M330.02 318.34V334.09M330.02 338.90V338.90" stroke="#000" stroke-opacity="1.0" stroke-width="1.05" fill="none"/><rect x="326.97" y="334.09" width="6.10" height="3.50" fill="#4ef802" fill-opacity="0.65" stroke="#000" stroke-opacity="1.0" stroke-width="1.05"/><rect x="326.97" y="338.46" width="6.10" height="0.44" fill="#4ef802" fill-opacity="0.65" stroke="#000" stroke-opacity="1.0" stroke-width="1.05"/><rect x="323.92" y="337.59" width="12.20" height="0.88" fill="#4ef802" fill-opacity="0.65" stroke="#000" stroke-opacity="1.0" stroke-width="1.05"/><path d="M323.92 338.02H336.12" stroke="#000" stroke-opacity="1.0" stroke-width="1.05"/>
<path d="M360.55 338.90V338.90M360.55 338.90V338.90" stroke="#000" stroke-opacity="1.0" stroke-width="1.05" fill="none"/><rect x="357.50" y="338.90" width="6.10" height="0.00" fill="#4ef802" fill-opacity="0.65" stroke="#000" stroke-opacity="1.0" stroke-width="1.05"/><rect x="357.50" y="338.90" width="6.10" height="0.00" fill="#4ef802" fill-opacity="0.65" stroke="#000" stroke-opacity="1.0" stroke-width="1.05"/><rect x="354.45" y="338.90" width="12.20" height="0.00" fill="#4ef802" fill-opacity="0.65" stroke="#000" stroke-opacity="1.0" stroke-width="1.05"/><path d="M354.45 338.90H366.65" stroke="#000" stroke-opacity="1.0" stroke-width="1.05"/>
<path d="M391.07 338.90V338.90M391.07 338.90V338.90" stroke="#000" stroke-opacity="1.0" stroke-width="1.05" fill="none"/><rect x="388.02" y="338.90" width="6.10" height="0.00" fill="#4ef802" fill-opacity="0.65" stroke="#000" stroke-opacity="1.0" stroke-width="1.05"/><rect x="388.02" y="338.90" width="6.10" height="0.00" fill="#4ef802" fill-opacity="0.65" stroke="#000" stroke-opacity="1.0" stroke-width="1.05"/><rect x="384.97" y="338.90" width="12.20" height="0.00" fill="#4ef802" fill-opacity="0.65" stroke="#000" stroke-opacity="1.0" stroke-width="1.05"/><path d="M384.97 338.90H397.18" stroke="#000" stroke-opacity="1.0" stroke-width="1.05"/>
<path d="M421.60 337.15V338.90M421.60 338.90V338.90" stroke="#000" stroke-opacity="1.0" stroke-width="1.05" fill="none"/><rect x="418.55" y="338.90" width="6.10" height="0.00" fill="#4ef802" fill-opacity="0.65" stroke="#000" stroke-opacity="1.0" stroke-width="1.05"/><rect x="418.55" y="338.90" width="6.10" height="0.00" fill="#4ef802" fill-opacity="0.65" stroke="#000" stroke-opacity="1.0" stroke-width="1.05"/><rect x="415.50" y="338.90" width="12.20" height="0.00" fill="#4ef802" fill-opacity="0.65" stroke="#000" stroke-opacity="1.0" stroke-width="1.05"/><path d="M415.50 338.90H427.70" stroke="#000" stroke-opacity="1.0" stroke-width="1.05"/>
<path d="M452.12 315.27V329.27M452.12 338.90V338.90" stroke="#000" stroke-opacity="1.0" stroke-width="1.05" fill="none"/><rect x="449.07" y="329.27" width="6.10" height="4.81" fill="#4ef802" fill-opacity="0.65" stroke="#000" stroke-opacity="1.0" stroke-width="1.05"/><rect x="449.07" y="338.46" width="6.10" height="0.44" fill="#4ef802" fill-opacity="0.65" stroke="#000" stroke-opacity="1.0" stroke-width="1.05"/><rect x="446.02" y="334.09" width="12.20" height="4.38" fill="#4ef802" fill-opacity="0.65" stroke="#000" stroke-opacity="1.0" stroke-width="1.05"/><path d="M446.02 337.59H458.23" stroke="#000" stroke-opacity="1.0" stroke-width="1.05"/>
<path d="M482.65 236.09V283.34M482.65 338.90V338.90" stroke="#000" stroke-opacity="1.0" stroke-width="1.05" fill="none"/><rect x="479.60" y="283.34" width="6.10" height="25.81" fill="#4ef802" fill-opacity="0.65" stroke="#000" stroke-opacity="1.0" stroke-width="1.05"/><rect x="479.60" y="338.46" width="6.10" height="0.44" fill="#4ef802" fill-opacity="0.65" stroke="#000" stroke-opacity="1.0" stroke-width="1.05"/><rect x="476.55" y="309.15" width="12.20" height="29.31" fill="#4ef802" fill-opacity="0.65" stroke="#000" stroke-opacity="1.0" stroke-width="1.05"/><path d="M476.55 333.21H488.75" stroke="#000" stroke-opacity="1.0" stroke-width="1.05"/>
<path d="M513.17 276.34V295.59M513.17 338.90V338.90" stroke="#000" stroke-opacity="1.0" stroke-width="1.05" fill="none"/><rect x="510.12" y="295.59" width="6.10" height="33.69" fill="#4ef802" fill-opacity="0.65" stroke="#000" stroke-opacity="1.0" stroke-width="1.05"/><rect x="510.12" y="338.68" width="6.10" height="0.22" fill="#4ef802" fill-opacity="0.65" stroke="#000" stroke-opacity="1.0" stroke-width="1.05"/><rect x="507.07" y="329.27" width="12.20" height="9.41" fill="#4ef802" fill-opacity="0.65" stroke="#000" stroke-opacity="1.0" stroke-width="1.05"/><path d="M507.07 338.02H519.27" stroke="#000" stroke-opacity="1.0" stroke-width="1.05"/>
<path d="M543.70 321.84V338.90M543.70 338.90V338.90" stroke="#000" stroke-opacity="1.0" stroke-width="1.05" fill="none"/><rect x="540.65" y="338.90" width="6.10" height="0.00" fill="#4ef802" fill-opacity="0.65" stroke="#000" stroke-opacity="1.0" stroke-width="1.05"/><rect x="540.65" y="338.90" width="6.10" height="0.00" fill="#4ef802" fill-opacity="0.65" stroke="#000" stroke-opacity="1.0" stroke-width="1.05"/><rect x="537.60" y="338.90" width="12.20" height="0.00" fill="#4ef802" fill-opacity="0.65" stroke="#000" stroke-opacity="1.0" stroke-width="1.05"/><path d="M537.60 338.90H549.80" stroke="#000" stroke-opacity="1.0" stroke-width="1.05"/>
<path d="M574.22 338.90V338.90M574.22 338.90V338.90" stroke="#000" stroke-opacity="1.0" stroke-width="1.05" fill="none"/><rect x="571.17" y="338.90" width="6.10" height="0.00" fill="#4ef802" fill-opacity="0.65" stroke="#000" stroke-opacity="1.0" stroke-width="1.05"/><rect x="571.17" y="338.90" width="6.10" height="0.00" fill="#4ef802" fill-opacity="0.65" stroke="#000" stroke-opacity="1.0" stroke-width="1.05"/><rect x="568.12" y="338.90" width="12.20" height="0.00" fill="#4ef802" fill-opacity="0.65" stroke="#000" stroke-opacity="1.0" stroke-width="1.05"/><path d="M568.12 338.90H580.32" stroke="#000" stroke-opacity="1.0" stroke-width="1.05"/>
<path d="M604.75 338.90V338.90M604.75 338.90V338.90" stroke="#000" stroke-opacity="1.0" stroke-width="1.05" fill="none"/><rect x="601.70" y="338.90" width="6.10" height="0.00" fill="#4ef802" fill-opacity="0.65" stroke="#000" stroke-opacity="1.0" stroke-width="1.05"/><rect x="601.70" y="338.90" width="6.10" height="0.00" fill="#4ef802" fill-opacity="0.65" stroke="#000" stroke-opacity="1.0" stroke-width="1.05"/><rect x="598.65" y="338.90" width="12.20" height="0.00" fill="#4ef802" fill-opacity="0.65" stroke="#000" stroke-opacity="1.0" stroke-width="1.05"/><path d="M598.65 338.90H610.85" stroke="#000" stroke-opacity="1.0" stroke-width="1.05"/>
<path d="M635.27 338.90V338.90M635.27 338.90V338.90" stroke="#000" stroke-opacity="1.0" stroke-width="1.05" fill="none"/><rect x="632.23" y="338.90" width="6.10" height="0.00" fill="#4ef802" fill-opacity="0.65" stroke="#000" stroke-opacity="1.0" stroke-width="1.05"/><rect x="632.23" y="338.90" width="6.10" height="0.00" fill="#4ef802" fill-opacity="0.65" stroke="#000" stroke-opacity="1.0" stroke-width="1.05"/><rect x="629.17" y="338.90" width="12.20" height="0.00" fill="#4ef802" fill-opacity="0.65" stroke="#000" stroke-opacity="1.0" stroke-width="1.05"/><path d="M629.17 338.90H641.38" stroke="#000" stroke-opacity="1.0" stroke-width="1.05"/>
<path d="M665.80 338.90V338.90M665.80 338.90V338.90" stroke="#000" stroke-opacity="1.0" stroke-width="1.05" fill="none"/><rect x="662.75" y="338.90" width="6.10" height="0.00" fill="#4ef802" fill-opacity="0.65" stroke="#000" stroke-opacity="1.0" stroke-width="1.05"/><rect x="662.75" y="338.90" width="6.10" height="0.00" fill="#4ef802" fill-opacity="0.65" stroke="#000" stroke-opacity="1.0" stroke-width="1.05"/><rect x="659.70" y="338.90" width="12.20" height="0.00" fill="#4ef802" fill-opacity="0.65" stroke="#000" stroke-opacity="1.0" stroke-width="1.05"/><path d="M659.70 338.90H671.90" stroke="#000" stroke-opacity="1.0" stroke-width="1.05"/>
<path d="M696.32 338.90V338.90M696.32 338.90V338.90" stroke="#000" stroke-opacity="1.0" stroke-width="1.05" fill="none"/><rect x="693.27" y="338.90" width="6.10" height="0.00" fill="#4ef802" fill-opacity="0.65" stroke="#000" stroke-opacity="1.0" stroke-width="1.05"/><rect x="693.27" y="338.90" width="6.10" height="0.00" fill="#4ef802" fill-opacity="0.65" stroke="#000" stroke-opacity="1.0" stroke-width="1.05"/><rect x="690.22" y="338.90" width="12.20" height="0.00" fill="#4ef802" fill-opacity="0.65" stroke="#000" stroke-opacity="1.0" stroke-width="1.05"/><path d="M690.22 338.90H702.42" stroke="#000" stroke-opacity="1.0" stroke-width="1.05"/>
<path d="M726.85 338.90V338.90M726.85 338.90V338.90" stroke="#000" stroke-opacity="1.0" stroke-width="1.05" fill="none"/><rect x="723.80" y="338.90" width="6.10" height="0.00" fill="#4ef802" fill-opacity="0.65" stroke="#000" stroke-opacity="1.0" stroke-width="1.05"/><rect x="723.80" y="338.90" width="6.10" height="0.00" fill="#4ef802" fill-opacity="0.65" stroke="#000" stroke-opacity="1.0" stroke-width="1.05"/><rect x="720.75" y="338.90" width="12.20" height="0.00" fill="#4ef802" fill-opacity="0.65" stroke="#000" stroke-opacity="1.0" stroke-width="1.05"/><path d="M720.75 338.90H732.95" stroke="#000" stroke-opacity="1.0" stroke-width="1.05"/>
<path d="M757.37 338.90V338.90M757.37 338.90V338.90" stroke="#000" stroke-opacity="1.0" stroke-width="1.05" fill="none"/><rect x="754.32" y="338.90" width="6.10" height="0.00" fill="#4ef802" fill-opacity="0.65" stroke="#000" stroke-opacity="1.0" stroke-width="1.05"/><rect x="754.32" y="338.90" width="6.10" height="0.00" fill="#4ef802" fill-opacity="0.65" stroke="#000" stroke-opacity="1.0" stroke-width="1.05"/><rect x="751.27" y="338.90" width="12.20" height="0.00" fill="#4ef802" fill-opacity="0.65" stroke="#000" stroke-opacity="1.0" stroke-width="1.05"/><path d="M751.27 338.90H763.47" stroke="#000" stroke-opacity="1.0" stroke-width="1.05"/>
<path d="M787.90 338.90V338.90M787.90 338.90V338.90" stroke="#000" stroke-opacity="1.0" stroke-width="1.05" fill="none"/><rect x="784.85" y="338.90" width="6.10" height="0.00" fill="#4ef802" fill-opacity="0.65" stroke="#000" stroke-opacity="1.0" stroke-width="1.05"/><rect x="784.85" y="338.90" width="6.10" height="0.00" fill="#4ef802" fill-opacity="0.65" stroke="#000" stroke-opacity="1.0" stroke-width="1.05"/><rect x="781.80" y="338.90" width="12.20" height="0.00" fill="#4ef802" fill-opacity="0.65" stroke="#000" stroke-opacity="1.0" stroke-width="1.05"/><path d="M781.80 338.90H794.00" stroke="#000" stroke-opacity="1.0" stroke-width="1.05"/>
<clipPath id="cp1"><rect x="263.37" y="336.91" width="11.20" height="1.06"/><rect x="266.42" y="333.71" width="5.10" height="2.19"/><rect x="293.90" y="336.91" width="11.20" height="1.06"/><rect x="296.95" y="330.65" width="5.10" height="5.26"/><rect x="327.47" y="334.59" width="5.10" height="2.50"/><rect x="446.52" y="334.59" width="11.20" height="3.38"/><rect x="449.57" y="329.77" width="5.10" height="3.81"/><rect x="477.05" y="309.65" width="11.20" height="28.31"/><rect x="480.10" y="283.84" width="5.10" height="24.81"/><rect x="507.57" y="329.77" width="11.20" height="8.41"/><rect x="510.62" y="296.09" width="5.10" height="32.69"/></clipPath>
<g clip-path="url(#cp1)">
<polyline points="55.30,338.90 85.82,338.90 116.35,338.90 146.88,338.90 177.40,338.90 207.93,338.90 238.45,338.90 268.97,338.90 299.50,338.90 330.02,338.90 360.55,338.90 391.07,338.90 421.60,338.90 452.12,335.84 482.65,332.34 513.17,338.90 543.70,338.90 574.22,338.90 604.75,338.90 635.27,338.90 665.80,338.90 696.32,338.90 726.85,338.90 757.37,338.90 787.90,338.90" fill="none" stroke="#d21e1e" stroke-opacity="0.75" stroke-width="1.6" stroke-linejoin="round"/>
<polyline points="55.30,338.90 85.82,338.90 116.35,338.90 146.88,338.90 177.40,338.90 207.93,338.90 238.45,338.90 268.97,337.15 299.50,336.27 330.02,336.27 360.55,338.90 391.07,338.90 421.60,338.90 452.12,334.96 482.65,320.96 513.17,329.71 543.70,337.59 574.22,338.90 604.75,338.90 635.27,338.90 665.80,338.90 696.32,338.90 726.85,338.90 757.37,338.90 787.90,338.90" fill="none" stroke="#1e1eaa" stroke-opacity="0.75" stroke-width="1.6" stroke-linejoin="round"/>
</g>
<rect x="40.0" y="231.4" width="763.20" height="112.80" fill="none" stroke="#000" stroke-width="1"/>
<line x1="35.60" y1="338.90" x2="40.0" y2="338.90" stroke="#000" stroke-width="1"/>
<text x="24.64" y="343.30" font-size="10.35" textLength="6.36" lengthAdjust="spacingAndGlyphs" fill="#111">0</text>
<line x1="35.60" y1="295.15" x2="40.0" y2="295.15" stroke="#000" stroke-width="1"/>
<text x="24.64" y="299.55" font-size="10.35" textLength="6.36" lengthAdjust="spacingAndGlyphs" fill="#111">1</text>
<line x1="35.60" y1="251.40" x2="40.0" y2="251.40" stroke="#000" stroke-width="1"/>
<text x="24.64" y="255.80" font-size="10.35" textLength="6.36" lengthAdjust="spacingAndGlyphs" fill="#111">2</text>
<line x1="55.30" y1="344.2" x2="55.30" y2="348.60" stroke="#000" stroke-width="1"/>
<line x1="177.40" y1="344.2" x2="177.40" y2="348.60" stroke="#000" stroke-width="1"/>
<line x1="299.50" y1="344.2" x2="299.50" y2="348.60" stroke="#000" stroke-width="1"/>
<line x1="421.60" y1="344.2" x2="421.60" y2="348.60" stroke="#000" stroke-width="1"/>
<line x1="543.70" y1="344.2" x2="543.70" y2="348.60" stroke="#000" stroke-width="1"/>
<line x1="665.80" y1="344.2" x2="665.80" y2="348.60" stroke="#000" stroke-width="1"/>
<line x1="787.90" y1="344.2" x2="787.90" y2="348.60" stroke="#000" stroke-width="1"/>
<text x="39.95" y="227.00" font-size="12.32" textLength="161.97" lengthAdjust="spacingAndGlyphs" fill="#111">Total precipitation (mm/6h)</text>
</g>
<g>
<g stroke="#e0e0e0" stroke-width="0.7" stroke-dasharray="2.2,1.8" fill="none">
<line x1="40.0" y1="480.30" x2="803.2" y2="480.30"/>
<line x1="40.0" y1="435.35" x2="803.2" y2="435.35"/>
<line x1="40.0" y1="390.40" x2="803.2" y2="390.40"/>
<line x1="55.30" y1="370.3" x2="55.30" y2="483.0"/>
<line x1="177.40" y1="370.3" x2="177.40" y2="483.0"/>
<line x1="299.50" y1="370.3" x2="299.50" y2="483.0"/>
<line x1="421.60" y1="370.3" x2="421.60" y2="483.0"/>
<line x1="543.70" y1="370.3" x2="543.70" y2="483.0"/>
<line x1="665.80" y1="370.3" x2="665.80" y2="483.0"/>
<line x1="787.90" y1="370.3" x2="787.90" y2="483.0"/>
</g>
<polyline points="55.30,461.24 85.82,442.81 116.35,445.24 146.88,445.51 177.40,449.19 207.93,429.96 238.45,418.81 268.97,402.81 299.50,456.57 330.02,455.13 360.55,439.67 391.07,420.70 421.60,400.38 452.12,417.37 482.65,428.61 513.17,443.26 543.70,461.60 574.22,430.86 604.75,423.39 635.27,412.88 665.80,444.07 696.32,453.15 726.85,476.07 757.37,466.10 787.90,460.88" fill="none" stroke="#d21e1e" stroke-opacity="1.0" stroke-width="1.6" stroke-linejoin="round"/>
<polyline points="55.30,461.24 85.82,443.17 116.35,445.87 146.88,447.40 177.40,451.98 207.93,431.75 238.45,420.70 268.97,411.98 299.50,450.18 330.02,453.78 360.55,443.71 391.07,426.81 421.60,431.66 452.12,418.27 482.65,425.28 513.17,429.96 543.70,451.98 574.22,440.02 604.75,432.56 635.27,421.95 665.80,443.08 696.32,440.56 726.85,448.92 757.37,447.67 787.90,453.06" fill="none" stroke="#1e1eaa" stroke-opacity="1.0" stroke-width="1.6" stroke-linejoin="round"/>
<path d="M55.30 461.24V461.24M55.30 461.24V461.24" stroke="#000" stroke-opacity="1.0" stroke-width="1.05" fill="none"/><rect x="52.25" y="461.24" width="6.10" height="0.00" fill="#4ef802" fill-opacity="0.65" stroke="#000" stroke-opacity="1.0" stroke-width="1.05"/><rect x="52.25" y="461.24" width="6.10" height="0.00" fill="#4ef802" fill-opacity="0.65" stroke="#000" stroke-opacity="1.0" stroke-width="1.05"/><rect x="49.20" y="461.24" width="12.20" height="0.00" fill="#4ef802" fill-opacity="0.65" stroke="#000" stroke-opacity="1.0" stroke-width="1.05"/><path d="M49.20 461.24H61.40" stroke="#000" stroke-opacity="1.0" stroke-width="1.05"/>
<path d="M85.82 440.02V440.92M85.82 445.51V448.92" stroke="#000" stroke-opacity="1.0" stroke-width="1.05" fill="none"/><rect x="82.77" y="440.92" width="6.10" height="0.54" fill="#4ef802" fill-opacity="0.65" stroke="#000" stroke-opacity="1.0" stroke-width="1.05"/><rect x="82.77" y="443.71" width="6.10" height="1.80" fill="#4ef802" fill-opacity="0.65" stroke="#000" stroke-opacity="1.0" stroke-width="1.05"/><rect x="79.72" y="441.46" width="12.20" height="2.25" fill="#4ef802" fill-opacity="0.65" stroke="#000" stroke-opacity="1.0" stroke-width="1.05"/><path d="M79.72 442.81H91.92" stroke="#000" stroke-opacity="1.0" stroke-width="1.05"/>
<path d="M116.35 443.44V444.16M116.35 447.04V448.30" stroke="#000" stroke-opacity="1.0" stroke-width="1.05" fill="none"/><rect x="113.30" y="444.16" width="6.10" height="0.63" fill="#4ef802" fill-opacity="0.65" stroke="#000" stroke-opacity="1.0" stroke-width="1.05"/><rect x="113.30" y="446.32" width="6.10" height="0.72" fill="#4ef802" fill-opacity="0.65" stroke="#000" stroke-opacity="1.0" stroke-width="1.05"/><rect x="110.25" y="444.79" width="12.20" height="1.53" fill="#4ef802" fill-opacity="0.65" stroke="#000" stroke-opacity="1.0" stroke-width="1.05"/><path d="M110.25 445.42H122.45" stroke="#000" stroke-opacity="1.0" stroke-width="1.05"/>
<path d="M146.88 440.56V446.50M146.88 450.18V454.77" stroke="#000" stroke-opacity="1.0" stroke-width="1.05" fill="none"/><rect x="143.82" y="446.50" width="6.10" height="0.54" fill="#4ef802" fill-opacity="0.65" stroke="#000" stroke-opacity="1.0" stroke-width="1.05"/><rect x="143.82" y="449.55" width="6.10" height="0.63" fill="#4ef802" fill-opacity="0.65" stroke="#000" stroke-opacity="1.0" stroke-width="1.05"/><rect x="140.78" y="447.04" width="12.20" height="2.52" fill="#4ef802" fill-opacity="0.65" stroke="#000" stroke-opacity="1.0" stroke-width="1.05"/><path d="M140.78 448.39H152.97" stroke="#000" stroke-opacity="1.0" stroke-width="1.05"/>
<path d="M177.40 446.50V448.30M177.40 457.56V462.14" stroke="#000" stroke-opacity="1.0" stroke-width="1.05" fill="none"/><rect x="174.35" y="448.30" width="6.10" height="1.26" fill="#4ef802" fill-opacity="0.65" stroke="#000" stroke-opacity="1.0" stroke-width="1.05"/><rect x="174.35" y="455.67" width="6.10" height="1.89" fill="#4ef802" fill-opacity="0.65" stroke="#000" stroke-opacity="1.0" stroke-width="1.05"/><rect x="171.30" y="449.55" width="12.20" height="6.11" fill="#4ef802" fill-opacity="0.65" stroke="#000" stroke-opacity="1.0" stroke-width="1.05"/><path d="M171.30 453.78H183.50" stroke="#000" stroke-opacity="1.0" stroke-width="1.05"/>
<path d="M207.93 428.61V429.33M207.93 433.64V434.09" stroke="#000" stroke-opacity="1.0" stroke-width="1.05" fill="none"/><rect x="204.88" y="429.33" width="6.10" height="1.08" fill="#4ef802" fill-opacity="0.65" stroke="#000" stroke-opacity="1.0" stroke-width="1.05"/><rect x="204.88" y="432.65" width="6.10" height="0.99" fill="#4ef802" fill-opacity="0.65" stroke="#000" stroke-opacity="1.0" stroke-width="1.05"/><rect x="201.83" y="430.41" width="12.20" height="2.25" fill="#4ef802" fill-opacity="0.65" stroke="#000" stroke-opacity="1.0" stroke-width="1.05"/><path d="M201.83 431.30H214.03" stroke="#000" stroke-opacity="1.0" stroke-width="1.05"/>
<path d="M238.45 413.32V416.11M238.45 423.84V425.28" stroke="#000" stroke-opacity="1.0" stroke-width="1.05" fill="none"/><rect x="235.40" y="416.11" width="6.10" height="2.16" fill="#4ef802" fill-opacity="0.65" stroke="#000" stroke-opacity="1.0" stroke-width="1.05"/><rect x="235.40" y="421.95" width="6.10" height="1.89" fill="#4ef802" fill-opacity="0.65" stroke="#000" stroke-opacity="1.0" stroke-width="1.05"/><rect x="232.35" y="418.27" width="12.20" height="3.69" fill="#4ef802" fill-opacity="0.65" stroke="#000" stroke-opacity="1.0" stroke-width="1.05"/><path d="M232.35 420.07H244.55" stroke="#000" stroke-opacity="1.0" stroke-width="1.05"/>
<path d="M268.97 403.17V405.86M268.97 414.76V419.44" stroke="#000" stroke-opacity="1.0" stroke-width="1.05" fill="none"/><rect x="265.92" y="405.86" width="6.10" height="2.88" fill="#4ef802" fill-opacity="0.65" stroke="#000" stroke-opacity="1.0" stroke-width="1.05"/><rect x="265.92" y="413.32" width="6.10" height="1.44" fill="#4ef802" fill-opacity="0.65" stroke="#000" stroke-opacity="1.0" stroke-width="1.05"/><rect x="262.87" y="408.74" width="12.20" height="4.58" fill="#4ef802" fill-opacity="0.65" stroke="#000" stroke-opacity="1.0" stroke-width="1.05"/><path d="M262.87 410.90H275.07" stroke="#000" stroke-opacity="1.0" stroke-width="1.05"/>
<path d="M299.50 433.19V441.46M299.50 464.48V468.61" stroke="#000" stroke-opacity="1.0" stroke-width="1.05" fill="none"/><rect x="296.45" y="441.46" width="6.10" height="3.15" fill="#4ef802" fill-opacity="0.65" stroke="#000" stroke-opacity="1.0" stroke-width="1.05"/><rect x="296.45" y="456.21" width="6.10" height="8.27" fill="#4ef802" fill-opacity="0.65" stroke="#000" stroke-opacity="1.0" stroke-width="1.05"/><rect x="293.40" y="444.61" width="12.20" height="11.60" fill="#4ef802" fill-opacity="0.65" stroke="#000" stroke-opacity="1.0" stroke-width="1.05"/><path d="M293.40 450.99H305.60" stroke="#000" stroke-opacity="1.0" stroke-width="1.05"/>
<path d="M330.02 429.96V443.26M330.02 465.38V472.30" stroke="#000" stroke-opacity="1.0" stroke-width="1.05" fill="none"/><rect x="326.97" y="443.26" width="6.10" height="7.82" fill="#4ef802" fill-opacity="0.65" stroke="#000" stroke-opacity="1.0" stroke-width="1.05"/><rect x="326.97" y="461.24" width="6.10" height="4.14" fill="#4ef802" fill-opacity="0.65" stroke="#000" stroke-opacity="1.0" stroke-width="1.05"/><rect x="323.92" y="451.08" width="12.20" height="10.16" fill="#4ef802" fill-opacity="0.65" stroke="#000" stroke-opacity="1.0" stroke-width="1.05"/><path d="M323.92 455.67H336.12" stroke="#000" stroke-opacity="1.0" stroke-width="1.05"/>
<path d="M360.55 424.92V432.56M360.55 458.09V469.06" stroke="#000" stroke-opacity="1.0" stroke-width="1.05" fill="none"/><rect x="357.50" y="432.56" width="6.10" height="4.14" fill="#4ef802" fill-opacity="0.65" stroke="#000" stroke-opacity="1.0" stroke-width="1.05"/><rect x="357.50" y="450.72" width="6.10" height="7.37" fill="#4ef802" fill-opacity="0.65" stroke="#000" stroke-opacity="1.0" stroke-width="1.05"/><rect x="354.45" y="436.70" width="12.20" height="14.02" fill="#4ef802" fill-opacity="0.65" stroke="#000" stroke-opacity="1.0" stroke-width="1.05"/><path d="M354.45 442.18H366.65" stroke="#000" stroke-opacity="1.0" stroke-width="1.05"/>
<path d="M391.07 396.69V409.19M391.07 445.24V470.41" stroke="#000" stroke-opacity="1.0" stroke-width="1.05" fill="none"/><rect x="388.02" y="409.19" width="6.10" height="9.62" fill="#4ef802" fill-opacity="0.65" stroke="#000" stroke-opacity="1.0" stroke-width="1.05"/><rect x="388.02" y="434.90" width="6.10" height="10.34" fill="#4ef802" fill-opacity="0.65" stroke="#000" stroke-opacity="1.0" stroke-width="1.05"/><rect x="384.97" y="418.81" width="12.20" height="16.09" fill="#4ef802" fill-opacity="0.65" stroke="#000" stroke-opacity="1.0" stroke-width="1.05"/><path d="M384.97 425.28H397.18" stroke="#000" stroke-opacity="1.0" stroke-width="1.05"/>
<path d="M421.60 374.58V394.54M421.60 456.57V475.36" stroke="#000" stroke-opacity="1.0" stroke-width="1.05" fill="none"/><rect x="418.55" y="394.54" width="6.10" height="27.06" fill="#4ef802" fill-opacity="0.65" stroke="#000" stroke-opacity="1.0" stroke-width="1.05"/><rect x="418.55" y="445.24" width="6.10" height="11.33" fill="#4ef802" fill-opacity="0.65" stroke="#000" stroke-opacity="1.0" stroke-width="1.05"/><rect x="415.50" y="421.60" width="12.20" height="23.64" fill="#4ef802" fill-opacity="0.65" stroke="#000" stroke-opacity="1.0" stroke-width="1.05"/><path d="M415.50 437.33H427.70" stroke="#000" stroke-opacity="1.0" stroke-width="1.05"/>
<path d="M452.12 377.72V393.01M452.12 440.38V450.72" stroke="#000" stroke-opacity="1.0" stroke-width="1.05" fill="none"/><rect x="449.07" y="393.01" width="6.10" height="13.48" fill="#4ef802" fill-opacity="0.65" stroke="#000" stroke-opacity="1.0" stroke-width="1.05"/><rect x="449.07" y="429.33" width="6.10" height="11.06" fill="#4ef802" fill-opacity="0.65" stroke="#000" stroke-opacity="1.0" stroke-width="1.05"/><rect x="446.02" y="406.49" width="12.20" height="22.83" fill="#4ef802" fill-opacity="0.65" stroke="#000" stroke-opacity="1.0" stroke-width="1.05"/><path d="M446.02 421.24H458.23" stroke="#000" stroke-opacity="1.0" stroke-width="1.05"/>
<path d="M482.65 389.32V397.32M482.65 450.18V455.13" stroke="#000" stroke-opacity="1.0" stroke-width="1.05" fill="none"/><rect x="479.60" y="397.32" width="6.10" height="15.10" fill="#4ef802" fill-opacity="0.65" stroke="#000" stroke-opacity="1.0" stroke-width="1.05"/><rect x="479.60" y="440.92" width="6.10" height="9.26" fill="#4ef802" fill-opacity="0.65" stroke="#000" stroke-opacity="1.0" stroke-width="1.05"/><rect x="476.55" y="412.43" width="12.20" height="28.50" fill="#4ef802" fill-opacity="0.65" stroke="#000" stroke-opacity="1.0" stroke-width="1.05"/><path d="M476.55 428.61H488.75" stroke="#000" stroke-opacity="1.0" stroke-width="1.05"/>
<path d="M513.17 389.32V396.24M513.17 451.08V455.13" stroke="#000" stroke-opacity="1.0" stroke-width="1.05" fill="none"/><rect x="510.12" y="396.24" width="6.10" height="23.19" fill="#4ef802" fill-opacity="0.65" stroke="#000" stroke-opacity="1.0" stroke-width="1.05"/><rect x="510.12" y="442.36" width="6.10" height="8.72" fill="#4ef802" fill-opacity="0.65" stroke="#000" stroke-opacity="1.0" stroke-width="1.05"/><rect x="507.07" y="419.44" width="12.20" height="22.92" fill="#4ef802" fill-opacity="0.65" stroke="#000" stroke-opacity="1.0" stroke-width="1.05"/><path d="M507.07 437.78H519.27" stroke="#000" stroke-opacity="1.0" stroke-width="1.05"/>
<path d="M543.70 401.28V431.21M543.70 472.30V474.73" stroke="#000" stroke-opacity="1.0" stroke-width="1.05" fill="none"/><rect x="540.65" y="431.21" width="6.10" height="7.28" fill="#4ef802" fill-opacity="0.65" stroke="#000" stroke-opacity="1.0" stroke-width="1.05"/><rect x="540.65" y="466.19" width="6.10" height="6.11" fill="#4ef802" fill-opacity="0.65" stroke="#000" stroke-opacity="1.0" stroke-width="1.05"/><rect x="537.60" y="438.50" width="12.20" height="27.69" fill="#4ef802" fill-opacity="0.65" stroke="#000" stroke-opacity="1.0" stroke-width="1.05"/><path d="M537.60 458.09H549.80" stroke="#000" stroke-opacity="1.0" stroke-width="1.05"/>
<path d="M574.22 411.53V418.27M574.22 463.13V470.41" stroke="#000" stroke-opacity="1.0" stroke-width="1.05" fill="none"/><rect x="571.17" y="418.27" width="6.10" height="15.37" fill="#4ef802" fill-opacity="0.65" stroke="#000" stroke-opacity="1.0" stroke-width="1.05"/><rect x="571.17" y="447.40" width="6.10" height="15.73" fill="#4ef802" fill-opacity="0.65" stroke="#000" stroke-opacity="1.0" stroke-width="1.05"/><rect x="568.12" y="433.64" width="12.20" height="13.75" fill="#4ef802" fill-opacity="0.65" stroke="#000" stroke-opacity="1.0" stroke-width="1.05"/><path d="M568.12 439.67H580.32" stroke="#000" stroke-opacity="1.0" stroke-width="1.05"/>
<path d="M604.75 406.94V413.32M604.75 448.30V475.36" stroke="#000" stroke-opacity="1.0" stroke-width="1.05" fill="none"/><rect x="601.70" y="413.32" width="6.10" height="10.52" fill="#4ef802" fill-opacity="0.65" stroke="#000" stroke-opacity="1.0" stroke-width="1.05"/><rect x="601.70" y="442.36" width="6.10" height="5.93" fill="#4ef802" fill-opacity="0.65" stroke="#000" stroke-opacity="1.0" stroke-width="1.05"/><rect x="598.65" y="423.84" width="12.20" height="18.52" fill="#4ef802" fill-opacity="0.65" stroke="#000" stroke-opacity="1.0" stroke-width="1.05"/><path d="M598.65 434.09H610.85" stroke="#000" stroke-opacity="1.0" stroke-width="1.05"/>
<path d="M635.27 385.28V401.01M635.27 453.78V463.13" stroke="#000" stroke-opacity="1.0" stroke-width="1.05" fill="none"/><rect x="632.23" y="401.01" width="6.10" height="8.18" fill="#4ef802" fill-opacity="0.65" stroke="#000" stroke-opacity="1.0" stroke-width="1.05"/><rect x="632.23" y="431.21" width="6.10" height="22.56" fill="#4ef802" fill-opacity="0.65" stroke="#000" stroke-opacity="1.0" stroke-width="1.05"/><rect x="629.17" y="409.19" width="12.20" height="22.03" fill="#4ef802" fill-opacity="0.65" stroke="#000" stroke-opacity="1.0" stroke-width="1.05"/><path d="M629.17 418.27H641.38" stroke="#000" stroke-opacity="1.0" stroke-width="1.05"/>
<path d="M665.80 421.78V428.52M665.80 467.53V477.60" stroke="#000" stroke-opacity="1.0" stroke-width="1.05" fill="none"/><rect x="662.75" y="428.52" width="6.10" height="1.44" fill="#4ef802" fill-opacity="0.65" stroke="#000" stroke-opacity="1.0" stroke-width="1.05"/><rect x="662.75" y="453.51" width="6.10" height="14.02" fill="#4ef802" fill-opacity="0.65" stroke="#000" stroke-opacity="1.0" stroke-width="1.05"/><rect x="659.70" y="429.96" width="12.20" height="23.55" fill="#4ef802" fill-opacity="0.65" stroke="#000" stroke-opacity="1.0" stroke-width="1.05"/><path d="M659.70 439.31H671.90" stroke="#000" stroke-opacity="1.0" stroke-width="1.05"/>
<path d="M696.32 425.28V426.81M696.32 459.80V467.71" stroke="#000" stroke-opacity="1.0" stroke-width="1.05" fill="none"/><rect x="693.27" y="426.81" width="6.10" height="3.15" fill="#4ef802" fill-opacity="0.65" stroke="#000" stroke-opacity="1.0" stroke-width="1.05"/><rect x="693.27" y="452.52" width="6.10" height="7.28" fill="#4ef802" fill-opacity="0.65" stroke="#000" stroke-opacity="1.0" stroke-width="1.05"/><rect x="690.22" y="429.96" width="12.20" height="22.56" fill="#4ef802" fill-opacity="0.65" stroke="#000" stroke-opacity="1.0" stroke-width="1.05"/><path d="M690.22 434.72H702.42" stroke="#000" stroke-opacity="1.0" stroke-width="1.05"/>
<path d="M726.85 428.52V433.28M726.85 466.55V475.54" stroke="#000" stroke-opacity="1.0" stroke-width="1.05" fill="none"/><rect x="723.80" y="433.28" width="6.10" height="3.15" fill="#4ef802" fill-opacity="0.65" stroke="#000" stroke-opacity="1.0" stroke-width="1.05"/><rect x="723.80" y="459.44" width="6.10" height="7.10" fill="#4ef802" fill-opacity="0.65" stroke="#000" stroke-opacity="1.0" stroke-width="1.05"/><rect x="720.75" y="436.43" width="12.20" height="23.01" fill="#4ef802" fill-opacity="0.65" stroke="#000" stroke-opacity="1.0" stroke-width="1.05"/><path d="M720.75 450.99H732.95" stroke="#000" stroke-opacity="1.0" stroke-width="1.05"/>
<path d="M757.37 410.09V429.15M757.37 466.10V473.38" stroke="#000" stroke-opacity="1.0" stroke-width="1.05" fill="none"/><rect x="754.32" y="429.15" width="6.10" height="8.36" fill="#4ef802" fill-opacity="0.65" stroke="#000" stroke-opacity="1.0" stroke-width="1.05"/><rect x="754.32" y="459.44" width="6.10" height="6.65" fill="#4ef802" fill-opacity="0.65" stroke="#000" stroke-opacity="1.0" stroke-width="1.05"/><rect x="751.27" y="437.51" width="12.20" height="21.94" fill="#4ef802" fill-opacity="0.65" stroke="#000" stroke-opacity="1.0" stroke-width="1.05"/><path d="M751.27 448.30H763.47" stroke="#000" stroke-opacity="1.0" stroke-width="1.05"/>
<path d="M787.90 423.93V436.43M787.90 471.67V478.23" stroke="#000" stroke-opacity="1.0" stroke-width="1.05" fill="none"/><rect x="784.85" y="436.43" width="6.10" height="5.66" fill="#4ef802" fill-opacity="0.65" stroke="#000" stroke-opacity="1.0" stroke-width="1.05"/><rect x="784.85" y="466.55" width="6.10" height="5.12" fill="#4ef802" fill-opacity="0.65" stroke="#000" stroke-opacity="1.0" stroke-width="1.05"/><rect x="781.80" y="442.09" width="12.20" height="24.45" fill="#4ef802" fill-opacity="0.65" stroke="#000" stroke-opacity="1.0" stroke-width="1.05"/><path d="M781.80 453.06H794.00" stroke="#000" stroke-opacity="1.0" stroke-width="1.05"/>
<clipPath id="cp2"><rect x="80.22" y="441.96" width="11.20" height="1.25"/><rect x="83.27" y="444.21" width="5.10" height="0.80"/><rect x="110.75" y="445.29" width="11.20" height="0.53"/><rect x="141.28" y="447.54" width="11.20" height="1.52"/><rect x="171.80" y="450.05" width="11.20" height="5.11"/><rect x="174.85" y="456.17" width="5.10" height="0.89"/><rect x="202.33" y="430.91" width="11.20" height="1.25"/><rect x="232.85" y="418.77" width="11.20" height="2.69"/><rect x="235.90" y="416.61" width="5.10" height="1.16"/><rect x="235.90" y="422.45" width="5.10" height="0.89"/><rect x="263.37" y="409.24" width="11.20" height="3.58"/><rect x="266.42" y="406.36" width="5.10" height="1.88"/><rect x="293.90" y="445.11" width="11.20" height="10.60"/><rect x="296.95" y="441.96" width="5.10" height="2.15"/><rect x="296.95" y="456.71" width="5.10" height="7.27"/><rect x="324.42" y="451.58" width="11.20" height="9.16"/><rect x="327.47" y="443.76" width="5.10" height="6.82"/><rect x="327.47" y="461.74" width="5.10" height="3.14"/><rect x="354.95" y="437.20" width="11.20" height="13.02"/><rect x="358.00" y="433.06" width="5.10" height="3.14"/><rect x="358.00" y="451.22" width="5.10" height="6.37"/><rect x="385.47" y="419.31" width="11.20" height="15.09"/><rect x="388.52" y="409.69" width="5.10" height="8.62"/><rect x="388.52" y="435.40" width="5.10" height="9.34"/><rect x="416.00" y="422.10" width="11.20" height="22.64"/><rect x="419.05" y="395.04" width="5.10" height="26.06"/><rect x="419.05" y="445.74" width="5.10" height="10.33"/><rect x="446.52" y="406.99" width="11.20" height="21.83"/><rect x="449.57" y="393.51" width="5.10" height="12.48"/><rect x="449.57" y="429.83" width="5.10" height="10.06"/><rect x="477.05" y="412.93" width="11.20" height="27.50"/><rect x="480.10" y="397.82" width="5.10" height="14.10"/><rect x="480.10" y="441.42" width="5.10" height="8.26"/><rect x="507.57" y="419.94" width="11.20" height="21.92"/><rect x="510.62" y="396.74" width="5.10" height="22.19"/><rect x="510.62" y="442.86" width="5.10" height="7.72"/><rect x="538.10" y="439.00" width="11.20" height="26.69"/><rect x="541.15" y="431.71" width="5.10" height="6.28"/><rect x="541.15" y="466.69" width="5.10" height="5.11"/><rect x="568.62" y="434.14" width="11.20" height="12.75"/><rect x="571.67" y="418.77" width="5.10" height="14.37"/><rect x="571.67" y="447.90" width="5.10" height="14.73"/><rect x="599.15" y="424.34" width="11.20" height="17.52"/><rect x="602.20" y="413.82" width="5.10" height="9.52"/><rect x="602.20" y="442.86" width="5.10" height="4.93"/><rect x="629.67" y="409.69" width="11.20" height="21.03"/><rect x="632.73" y="401.51" width="5.10" height="7.18"/><rect x="632.73" y="431.71" width="5.10" height="21.56"/><rect x="660.20" y="430.46" width="11.20" height="22.55"/><rect x="663.25" y="454.01" width="5.10" height="13.02"/><rect x="690.72" y="430.46" width="11.20" height="21.56"/><rect x="693.77" y="427.31" width="5.10" height="2.15"/><rect x="693.77" y="453.02" width="5.10" height="6.28"/><rect x="721.25" y="436.93" width="11.20" height="22.01"/><rect x="724.30" y="433.78" width="5.10" height="2.15"/><rect x="724.30" y="459.94" width="5.10" height="6.10"/><rect x="751.77" y="438.01" width="11.20" height="20.94"/><rect x="754.82" y="429.65" width="5.10" height="7.36"/><rect x="754.82" y="459.94" width="5.10" height="5.65"/><rect x="782.30" y="442.59" width="11.20" height="23.45"/><rect x="785.35" y="436.93" width="5.10" height="4.66"/><rect x="785.35" y="467.05" width="5.10" height="4.12"/></clipPath>
<g clip-path="url(#cp2)">
<polyline points="55.30,461.24 85.82,442.81 116.35,445.24 146.88,445.51 177.40,449.19 207.93,429.96 238.45,418.81 268.97,402.81 299.50,456.57 330.02,455.13 360.55,439.67 391.07,420.70 421.60,400.38 452.12,417.37 482.65,428.61 513.17,443.26 543.70,461.60 574.22,430.86 604.75,423.39 635.27,412.88 665.80,444.07 696.32,453.15 726.85,476.07 757.37,466.10 787.90,460.88" fill="none" stroke="#d21e1e" stroke-opacity="0.75" stroke-width="1.6" stroke-linejoin="round"/>
<polyline points="55.30,461.24 85.82,443.17 116.35,445.87 146.88,447.40 177.40,451.98 207.93,431.75 238.45,420.70 268.97,411.98 299.50,450.18 330.02,453.78 360.55,443.71 391.07,426.81 421.60,431.66 452.12,418.27 482.65,425.28 513.17,429.96 543.70,451.98 574.22,440.02 604.75,432.56 635.27,421.95 665.80,443.08 696.32,440.56 726.85,448.92 757.37,447.67 787.90,453.06" fill="none" stroke="#1e1eaa" stroke-opacity="0.75" stroke-width="1.6" stroke-linejoin="round"/>
</g>
<rect x="40.0" y="370.3" width="763.20" height="112.70" fill="none" stroke="#000" stroke-width="1"/>
<line x1="35.60" y1="480.30" x2="40.0" y2="480.30" stroke="#000" stroke-width="1"/>
<text x="24.64" y="484.70" font-size="10.35" textLength="6.36" lengthAdjust="spacingAndGlyphs" fill="#111">0</text>
<line x1="35.60" y1="435.35" x2="40.0" y2="435.35" stroke="#000" stroke-width="1"/>
<text x="24.64" y="439.75" font-size="10.35" textLength="6.36" lengthAdjust="spacingAndGlyphs" fill="#111">5</text>
<line x1="35.60" y1="390.40" x2="40.0" y2="390.40" stroke="#000" stroke-width="1"/>
<text x="18.27" y="394.80" font-size="10.35" textLength="12.76" lengthAdjust="spacingAndGlyphs" fill="#111">10</text>
<line x1="55.30" y1="483.0" x2="55.30" y2="487.40" stroke="#000" stroke-width="1"/>
<line x1="177.40" y1="483.0" x2="177.40" y2="487.40" stroke="#000" stroke-width="1"/>
<line x1="299.50" y1="483.0" x2="299.50" y2="487.40" stroke="#000" stroke-width="1"/>
<line x1="421.60" y1="483.0" x2="421.60" y2="487.40" stroke="#000" stroke-width="1"/>
<line x1="543.70" y1="483.0" x2="543.70" y2="487.40" stroke="#000" stroke-width="1"/>
<line x1="665.80" y1="483.0" x2="665.80" y2="487.40" stroke="#000" stroke-width="1"/>
<line x1="787.90" y1="483.0" x2="787.90" y2="487.40" stroke="#000" stroke-width="1"/>
<text x="40.00" y="365.50" font-size="12.32" textLength="133.24" lengthAdjust="spacingAndGlyphs" fill="#111">10m wind speed (m/s)</text>
</g>
<g>
<g stroke="#e0e0e0" stroke-width="0.7" stroke-dasharray="2.2,1.8" fill="none">
<line x1="40.0" y1="609.20" x2="803.2" y2="609.20"/>
<line x1="40.0" y1="582.25" x2="803.2" y2="582.25"/>
<line x1="40.0" y1="555.30" x2="803.2" y2="555.30"/>
<line x1="40.0" y1="528.35" x2="803.2" y2="528.35"/>
<line x1="55.30" y1="509.0" x2="55.30" y2="622.0"/>
<line x1="177.40" y1="509.0" x2="177.40" y2="622.0"/>
<line x1="299.50" y1="509.0" x2="299.50" y2="622.0"/>
<line x1="421.60" y1="509.0" x2="421.60" y2="622.0"/>
<line x1="543.70" y1="509.0" x2="543.70" y2="622.0"/>
<line x1="665.80" y1="509.0" x2="665.80" y2="622.0"/>
<line x1="787.90" y1="509.0" x2="787.90" y2="622.0"/>
</g>
<polyline points="55.30,555.03 85.82,571.20 116.35,578.91 146.88,553.31 177.40,531.05 207.93,549.48 238.45,549.37 268.97,530.07 299.50,519.40 330.02,552.23 360.55,554.38 391.07,535.36 421.60,531.96 452.12,563.28 482.65,575.24 513.17,573.46 543.70,567.32 574.22,585.00 604.75,591.84 635.27,569.69 665.80,552.93 696.32,575.89 726.85,586.29 757.37,559.77 787.90,548.72" fill="none" stroke="#d21e1e" stroke-opacity="1.0" stroke-width="1.6" stroke-linejoin="round"/>
<polyline points="55.30,555.03 85.82,571.20 116.35,578.91 146.88,553.31 177.40,532.12 207.93,549.48 238.45,549.37 268.97,530.07 299.50,519.40 330.02,550.72 360.55,557.46 391.07,537.51 421.60,531.96 452.12,563.60 482.65,577.99 513.17,574.33 543.70,567.91 574.22,586.29 604.75,593.68 635.27,573.36 665.80,558.10 696.32,581.12 726.85,591.09 757.37,569.58 787.90,552.93" fill="none" stroke="#1e1eaa" stroke-opacity="1.0" stroke-width="1.6" stroke-linejoin="round"/>
<path d="M55.30 555.03V555.03M55.30 555.03V555.03" stroke="#000" stroke-opacity="1.0" stroke-width="1.05" fill="none"/><rect x="52.25" y="555.03" width="6.10" height="0.00" fill="#4ef802" fill-opacity="0.65" stroke="#000" stroke-opacity="1.0" stroke-width="1.05"/><rect x="52.25" y="555.03" width="6.10" height="0.00" fill="#4ef802" fill-opacity="0.65" stroke="#000" stroke-opacity="1.0" stroke-width="1.05"/><rect x="49.20" y="555.03" width="12.20" height="0.00" fill="#4ef802" fill-opacity="0.65" stroke="#000" stroke-opacity="1.0" stroke-width="1.05"/><path d="M49.20 555.03H61.40" stroke="#000" stroke-opacity="1.0" stroke-width="1.05"/>
<path d="M85.82 568.78V570.12M85.82 572.82V574.00" stroke="#000" stroke-opacity="1.0" stroke-width="1.05" fill="none"/><rect x="82.77" y="570.12" width="6.10" height="0.81" fill="#4ef802" fill-opacity="0.65" stroke="#000" stroke-opacity="1.0" stroke-width="1.05"/><rect x="82.77" y="572.28" width="6.10" height="0.54" fill="#4ef802" fill-opacity="0.65" stroke="#000" stroke-opacity="1.0" stroke-width="1.05"/><rect x="79.72" y="570.93" width="12.20" height="1.35" fill="#4ef802" fill-opacity="0.65" stroke="#000" stroke-opacity="1.0" stroke-width="1.05"/><path d="M79.72 571.63H91.92" stroke="#000" stroke-opacity="1.0" stroke-width="1.05"/>
<path d="M116.35 576.32V577.67M116.35 580.36V581.17" stroke="#000" stroke-opacity="1.0" stroke-width="1.05" fill="none"/><rect x="113.30" y="577.67" width="6.10" height="0.81" fill="#4ef802" fill-opacity="0.65" stroke="#000" stroke-opacity="1.0" stroke-width="1.05"/><rect x="113.30" y="579.82" width="6.10" height="0.54" fill="#4ef802" fill-opacity="0.65" stroke="#000" stroke-opacity="1.0" stroke-width="1.05"/><rect x="110.25" y="578.48" width="12.20" height="1.35" fill="#4ef802" fill-opacity="0.65" stroke="#000" stroke-opacity="1.0" stroke-width="1.05"/><path d="M110.25 579.29H122.45" stroke="#000" stroke-opacity="1.0" stroke-width="1.05"/>
<path d="M146.88 550.45V552.07M146.88 554.49V555.30" stroke="#000" stroke-opacity="1.0" stroke-width="1.05" fill="none"/><rect x="143.82" y="552.07" width="6.10" height="0.54" fill="#4ef802" fill-opacity="0.65" stroke="#000" stroke-opacity="1.0" stroke-width="1.05"/><rect x="143.82" y="553.95" width="6.10" height="0.54" fill="#4ef802" fill-opacity="0.65" stroke="#000" stroke-opacity="1.0" stroke-width="1.05"/><rect x="140.78" y="552.61" width="12.20" height="1.35" fill="#4ef802" fill-opacity="0.65" stroke="#000" stroke-opacity="1.0" stroke-width="1.05"/><path d="M140.78 553.31H152.97" stroke="#000" stroke-opacity="1.0" stroke-width="1.05"/>
<path d="M177.40 527.81V529.43M177.40 533.74V534.28" stroke="#000" stroke-opacity="1.0" stroke-width="1.05" fill="none"/><rect x="174.35" y="529.43" width="6.10" height="1.08" fill="#4ef802" fill-opacity="0.65" stroke="#000" stroke-opacity="1.0" stroke-width="1.05"/><rect x="174.35" y="532.66" width="6.10" height="1.08" fill="#4ef802" fill-opacity="0.65" stroke="#000" stroke-opacity="1.0" stroke-width="1.05"/><rect x="171.30" y="530.51" width="12.20" height="2.16" fill="#4ef802" fill-opacity="0.65" stroke="#000" stroke-opacity="1.0" stroke-width="1.05"/><path d="M171.30 531.58H183.50" stroke="#000" stroke-opacity="1.0" stroke-width="1.05"/>
<path d="M207.93 547.75V548.29M207.93 550.45V550.99" stroke="#000" stroke-opacity="1.0" stroke-width="1.05" fill="none"/><rect x="204.88" y="548.29" width="6.10" height="0.54" fill="#4ef802" fill-opacity="0.65" stroke="#000" stroke-opacity="1.0" stroke-width="1.05"/><rect x="204.88" y="549.91" width="6.10" height="0.54" fill="#4ef802" fill-opacity="0.65" stroke="#000" stroke-opacity="1.0" stroke-width="1.05"/><rect x="201.83" y="548.83" width="12.20" height="1.08" fill="#4ef802" fill-opacity="0.65" stroke="#000" stroke-opacity="1.0" stroke-width="1.05"/><path d="M201.83 549.37H214.03" stroke="#000" stroke-opacity="1.0" stroke-width="1.05"/>
<path d="M238.45 546.68V547.75M238.45 553.14V554.22" stroke="#000" stroke-opacity="1.0" stroke-width="1.05" fill="none"/><rect x="235.40" y="547.75" width="6.10" height="1.08" fill="#4ef802" fill-opacity="0.65" stroke="#000" stroke-opacity="1.0" stroke-width="1.05"/><rect x="235.40" y="552.07" width="6.10" height="1.08" fill="#4ef802" fill-opacity="0.65" stroke="#000" stroke-opacity="1.0" stroke-width="1.05"/><rect x="232.35" y="548.83" width="12.20" height="3.23" fill="#4ef802" fill-opacity="0.65" stroke="#000" stroke-opacity="1.0" stroke-width="1.05"/><path d="M232.35 550.45H244.55" stroke="#000" stroke-opacity="1.0" stroke-width="1.05"/>
<path d="M268.97 527.81V528.89M268.97 531.58V532.66" stroke="#000" stroke-opacity="1.0" stroke-width="1.05" fill="none"/><rect x="265.92" y="528.89" width="6.10" height="0.54" fill="#4ef802" fill-opacity="0.65" stroke="#000" stroke-opacity="1.0" stroke-width="1.05"/><rect x="265.92" y="531.05" width="6.10" height="0.54" fill="#4ef802" fill-opacity="0.65" stroke="#000" stroke-opacity="1.0" stroke-width="1.05"/><rect x="262.87" y="529.43" width="12.20" height="1.62" fill="#4ef802" fill-opacity="0.65" stroke="#000" stroke-opacity="1.0" stroke-width="1.05"/><path d="M262.87 530.51H275.07" stroke="#000" stroke-opacity="1.0" stroke-width="1.05"/>
<path d="M299.50 513.53V515.95M299.50 522.96V524.20" stroke="#000" stroke-opacity="1.0" stroke-width="1.05" fill="none"/><rect x="296.45" y="515.95" width="6.10" height="1.62" fill="#4ef802" fill-opacity="0.65" stroke="#000" stroke-opacity="1.0" stroke-width="1.05"/><rect x="296.45" y="521.34" width="6.10" height="1.62" fill="#4ef802" fill-opacity="0.65" stroke="#000" stroke-opacity="1.0" stroke-width="1.05"/><rect x="293.40" y="517.57" width="12.20" height="3.77" fill="#4ef802" fill-opacity="0.65" stroke="#000" stroke-opacity="1.0" stroke-width="1.05"/><path d="M293.40 519.40H305.60" stroke="#000" stroke-opacity="1.0" stroke-width="1.05"/>
<path d="M330.02 538.59V545.06M330.02 553.14V558.00" stroke="#000" stroke-opacity="1.0" stroke-width="1.05" fill="none"/><rect x="326.97" y="545.06" width="6.10" height="0.54" fill="#4ef802" fill-opacity="0.65" stroke="#000" stroke-opacity="1.0" stroke-width="1.05"/><rect x="326.97" y="552.17" width="6.10" height="0.97" fill="#4ef802" fill-opacity="0.65" stroke="#000" stroke-opacity="1.0" stroke-width="1.05"/><rect x="323.92" y="545.60" width="12.20" height="6.58" fill="#4ef802" fill-opacity="0.65" stroke="#000" stroke-opacity="1.0" stroke-width="1.05"/><path d="M323.92 549.91H336.12" stroke="#000" stroke-opacity="1.0" stroke-width="1.05"/>
<path d="M360.55 550.45V553.14M360.55 569.21V572.93" stroke="#000" stroke-opacity="1.0" stroke-width="1.05" fill="none"/><rect x="357.50" y="553.14" width="6.10" height="1.83" fill="#4ef802" fill-opacity="0.65" stroke="#000" stroke-opacity="1.0" stroke-width="1.05"/><rect x="357.50" y="563.28" width="6.10" height="5.93" fill="#4ef802" fill-opacity="0.65" stroke="#000" stroke-opacity="1.0" stroke-width="1.05"/><rect x="354.45" y="554.98" width="12.20" height="8.30" fill="#4ef802" fill-opacity="0.65" stroke="#000" stroke-opacity="1.0" stroke-width="1.05"/><path d="M354.45 556.81H366.65" stroke="#000" stroke-opacity="1.0" stroke-width="1.05"/>
<path d="M391.07 528.35V531.58M391.07 552.17V562.41" stroke="#000" stroke-opacity="1.0" stroke-width="1.05" fill="none"/><rect x="388.02" y="531.58" width="6.10" height="2.69" fill="#4ef802" fill-opacity="0.65" stroke="#000" stroke-opacity="1.0" stroke-width="1.05"/><rect x="388.02" y="539.29" width="6.10" height="12.88" fill="#4ef802" fill-opacity="0.65" stroke="#000" stroke-opacity="1.0" stroke-width="1.05"/><rect x="384.97" y="534.28" width="12.20" height="5.01" fill="#4ef802" fill-opacity="0.65" stroke="#000" stroke-opacity="1.0" stroke-width="1.05"/><path d="M384.97 535.57H397.18" stroke="#000" stroke-opacity="1.0" stroke-width="1.05"/>
<path d="M421.60 515.68V518.65M421.60 545.81V567.91" stroke="#000" stroke-opacity="1.0" stroke-width="1.05" fill="none"/><rect x="418.55" y="518.65" width="6.10" height="1.35" fill="#4ef802" fill-opacity="0.65" stroke="#000" stroke-opacity="1.0" stroke-width="1.05"/><rect x="418.55" y="542.09" width="6.10" height="3.72" fill="#4ef802" fill-opacity="0.65" stroke="#000" stroke-opacity="1.0" stroke-width="1.05"/><rect x="415.50" y="520.00" width="12.20" height="22.10" fill="#4ef802" fill-opacity="0.65" stroke="#000" stroke-opacity="1.0" stroke-width="1.05"/><path d="M415.50 531.58H427.70" stroke="#000" stroke-opacity="1.0" stroke-width="1.05"/>
<path d="M452.12 544.52V550.72M452.12 571.58V577.72" stroke="#000" stroke-opacity="1.0" stroke-width="1.05" fill="none"/><rect x="449.07" y="550.72" width="6.10" height="10.67" fill="#4ef802" fill-opacity="0.65" stroke="#000" stroke-opacity="1.0" stroke-width="1.05"/><rect x="449.07" y="567.32" width="6.10" height="4.26" fill="#4ef802" fill-opacity="0.65" stroke="#000" stroke-opacity="1.0" stroke-width="1.05"/><rect x="446.02" y="561.39" width="12.20" height="5.93" fill="#4ef802" fill-opacity="0.65" stroke="#000" stroke-opacity="1.0" stroke-width="1.05"/><path d="M446.02 564.79H458.23" stroke="#000" stroke-opacity="1.0" stroke-width="1.05"/>
<path d="M482.65 571.58V574.70M482.65 590.50V594.59" stroke="#000" stroke-opacity="1.0" stroke-width="1.05" fill="none"/><rect x="479.60" y="574.70" width="6.10" height="1.08" fill="#4ef802" fill-opacity="0.65" stroke="#000" stroke-opacity="1.0" stroke-width="1.05"/><rect x="479.60" y="580.20" width="6.10" height="10.29" fill="#4ef802" fill-opacity="0.65" stroke="#000" stroke-opacity="1.0" stroke-width="1.05"/><rect x="476.55" y="575.78" width="12.20" height="4.42" fill="#4ef802" fill-opacity="0.65" stroke="#000" stroke-opacity="1.0" stroke-width="1.05"/><path d="M476.55 577.67H488.75" stroke="#000" stroke-opacity="1.0" stroke-width="1.05"/>
<path d="M513.17 562.85V567.32M513.17 582.68V589.42" stroke="#000" stroke-opacity="1.0" stroke-width="1.05" fill="none"/><rect x="510.12" y="567.32" width="6.10" height="3.34" fill="#4ef802" fill-opacity="0.65" stroke="#000" stroke-opacity="1.0" stroke-width="1.05"/><rect x="510.12" y="579.02" width="6.10" height="3.67" fill="#4ef802" fill-opacity="0.65" stroke="#000" stroke-opacity="1.0" stroke-width="1.05"/><rect x="507.07" y="570.66" width="12.20" height="8.35" fill="#4ef802" fill-opacity="0.65" stroke="#000" stroke-opacity="1.0" stroke-width="1.05"/><path d="M507.07 572.93H519.27" stroke="#000" stroke-opacity="1.0" stroke-width="1.05"/>
<path d="M543.70 552.17V555.46M543.70 575.24V583.49" stroke="#000" stroke-opacity="1.0" stroke-width="1.05" fill="none"/><rect x="540.65" y="555.46" width="6.10" height="10.08" fill="#4ef802" fill-opacity="0.65" stroke="#000" stroke-opacity="1.0" stroke-width="1.05"/><rect x="540.65" y="571.63" width="6.10" height="3.61" fill="#4ef802" fill-opacity="0.65" stroke="#000" stroke-opacity="1.0" stroke-width="1.05"/><rect x="537.60" y="565.54" width="12.20" height="6.09" fill="#4ef802" fill-opacity="0.65" stroke="#000" stroke-opacity="1.0" stroke-width="1.05"/><path d="M537.60 567.32H549.80" stroke="#000" stroke-opacity="1.0" stroke-width="1.05"/>
<path d="M574.22 576.48V577.99M574.22 597.40V604.19" stroke="#000" stroke-opacity="1.0" stroke-width="1.05" fill="none"/><rect x="571.17" y="577.99" width="6.10" height="4.26" fill="#4ef802" fill-opacity="0.65" stroke="#000" stroke-opacity="1.0" stroke-width="1.05"/><rect x="571.17" y="589.10" width="6.10" height="8.30" fill="#4ef802" fill-opacity="0.65" stroke="#000" stroke-opacity="1.0" stroke-width="1.05"/><rect x="568.12" y="582.25" width="12.20" height="6.85" fill="#4ef802" fill-opacity="0.65" stroke="#000" stroke-opacity="1.0" stroke-width="1.05"/><path d="M568.12 585.43H580.32" stroke="#000" stroke-opacity="1.0" stroke-width="1.05"/>
<path d="M604.75 583.49V589.10M604.75 604.19V611.63" stroke="#000" stroke-opacity="1.0" stroke-width="1.05" fill="none"/><rect x="601.70" y="589.10" width="6.10" height="1.40" fill="#4ef802" fill-opacity="0.65" stroke="#000" stroke-opacity="1.0" stroke-width="1.05"/><rect x="601.70" y="597.40" width="6.10" height="6.79" fill="#4ef802" fill-opacity="0.65" stroke="#000" stroke-opacity="1.0" stroke-width="1.05"/><rect x="598.65" y="590.50" width="12.20" height="6.90" fill="#4ef802" fill-opacity="0.65" stroke="#000" stroke-opacity="1.0" stroke-width="1.05"/><path d="M598.65 593.68H610.85" stroke="#000" stroke-opacity="1.0" stroke-width="1.05"/>
<path d="M635.27 561.77V566.62M635.27 588.45V603.43" stroke="#000" stroke-opacity="1.0" stroke-width="1.05" fill="none"/><rect x="632.23" y="566.62" width="6.10" height="4.04" fill="#4ef802" fill-opacity="0.65" stroke="#000" stroke-opacity="1.0" stroke-width="1.05"/><rect x="632.23" y="577.40" width="6.10" height="11.05" fill="#4ef802" fill-opacity="0.65" stroke="#000" stroke-opacity="1.0" stroke-width="1.05"/><rect x="629.17" y="570.66" width="12.20" height="6.74" fill="#4ef802" fill-opacity="0.65" stroke="#000" stroke-opacity="1.0" stroke-width="1.05"/><path d="M629.17 574.17H641.38" stroke="#000" stroke-opacity="1.0" stroke-width="1.05"/>
<path d="M665.80 541.83V549.37M665.80 568.99V593.57" stroke="#000" stroke-opacity="1.0" stroke-width="1.05" fill="none"/><rect x="662.75" y="549.37" width="6.10" height="3.23" fill="#4ef802" fill-opacity="0.65" stroke="#000" stroke-opacity="1.0" stroke-width="1.05"/><rect x="662.75" y="559.77" width="6.10" height="9.22" fill="#4ef802" fill-opacity="0.65" stroke="#000" stroke-opacity="1.0" stroke-width="1.05"/><rect x="659.70" y="552.61" width="12.20" height="7.17" fill="#4ef802" fill-opacity="0.65" stroke="#000" stroke-opacity="1.0" stroke-width="1.05"/><path d="M659.70 555.62H671.90" stroke="#000" stroke-opacity="1.0" stroke-width="1.05"/>
<path d="M696.32 563.98V574.81M696.32 593.19V610.28" stroke="#000" stroke-opacity="1.0" stroke-width="1.05" fill="none"/><rect x="693.27" y="574.81" width="6.10" height="4.20" fill="#4ef802" fill-opacity="0.65" stroke="#000" stroke-opacity="1.0" stroke-width="1.05"/><rect x="693.27" y="585.27" width="6.10" height="7.92" fill="#4ef802" fill-opacity="0.65" stroke="#000" stroke-opacity="1.0" stroke-width="1.05"/><rect x="690.22" y="579.02" width="12.20" height="6.25" fill="#4ef802" fill-opacity="0.65" stroke="#000" stroke-opacity="1.0" stroke-width="1.05"/><path d="M690.22 581.50H702.42" stroke="#000" stroke-opacity="1.0" stroke-width="1.05"/>
<path d="M726.85 577.99V579.39M726.85 602.41V616.58" stroke="#000" stroke-opacity="1.0" stroke-width="1.05" fill="none"/><rect x="723.80" y="579.39" width="6.10" height="9.00" fill="#4ef802" fill-opacity="0.65" stroke="#000" stroke-opacity="1.0" stroke-width="1.05"/><rect x="723.80" y="596.10" width="6.10" height="6.31" fill="#4ef802" fill-opacity="0.65" stroke="#000" stroke-opacity="1.0" stroke-width="1.05"/><rect x="720.75" y="588.39" width="12.20" height="7.71" fill="#4ef802" fill-opacity="0.65" stroke="#000" stroke-opacity="1.0" stroke-width="1.05"/><path d="M720.75 591.52H732.95" stroke="#000" stroke-opacity="1.0" stroke-width="1.05"/>
<path d="M757.37 550.45V554.38M757.37 579.39V605.10" stroke="#000" stroke-opacity="1.0" stroke-width="1.05" fill="none"/><rect x="754.32" y="554.38" width="6.10" height="6.20" fill="#4ef802" fill-opacity="0.65" stroke="#000" stroke-opacity="1.0" stroke-width="1.05"/><rect x="754.32" y="575.89" width="6.10" height="3.50" fill="#4ef802" fill-opacity="0.65" stroke="#000" stroke-opacity="1.0" stroke-width="1.05"/><rect x="751.27" y="560.58" width="12.20" height="15.31" fill="#4ef802" fill-opacity="0.65" stroke="#000" stroke-opacity="1.0" stroke-width="1.05"/><path d="M751.27 570.18H763.47" stroke="#000" stroke-opacity="1.0" stroke-width="1.05"/>
<path d="M787.90 540.42V544.52M787.90 561.23V582.79" stroke="#000" stroke-opacity="1.0" stroke-width="1.05" fill="none"/><rect x="784.85" y="544.52" width="6.10" height="1.62" fill="#4ef802" fill-opacity="0.65" stroke="#000" stroke-opacity="1.0" stroke-width="1.05"/><rect x="784.85" y="558.53" width="6.10" height="2.69" fill="#4ef802" fill-opacity="0.65" stroke="#000" stroke-opacity="1.0" stroke-width="1.05"/><rect x="781.80" y="546.14" width="12.20" height="12.40" fill="#4ef802" fill-opacity="0.65" stroke="#000" stroke-opacity="1.0" stroke-width="1.05"/><path d="M781.80 552.61H794.00" stroke="#000" stroke-opacity="1.0" stroke-width="1.05"/>
<clipPath id="cp3"><rect x="171.80" y="531.01" width="11.20" height="1.16"/><rect x="232.85" y="549.33" width="11.20" height="2.23"/><rect x="263.37" y="529.93" width="11.20" height="0.62"/><rect x="293.90" y="518.07" width="11.20" height="2.77"/><rect x="296.95" y="516.45" width="5.10" height="0.62"/><rect x="296.95" y="521.84" width="5.10" height="0.62"/><rect x="324.42" y="546.10" width="11.20" height="5.58"/><rect x="354.95" y="555.48" width="11.20" height="7.30"/><rect x="358.00" y="553.64" width="5.10" height="0.83"/><rect x="358.00" y="563.78" width="5.10" height="4.93"/><rect x="385.47" y="534.78" width="11.20" height="4.01"/><rect x="388.52" y="532.08" width="5.10" height="1.69"/><rect x="388.52" y="539.79" width="5.10" height="11.88"/><rect x="416.00" y="520.50" width="11.20" height="21.10"/><rect x="419.05" y="542.59" width="5.10" height="2.72"/><rect x="446.52" y="561.89" width="11.20" height="4.93"/><rect x="449.57" y="551.22" width="5.10" height="9.67"/><rect x="449.57" y="567.82" width="5.10" height="3.26"/><rect x="477.05" y="576.28" width="11.20" height="3.42"/><rect x="480.10" y="580.70" width="5.10" height="9.29"/><rect x="507.57" y="571.16" width="11.20" height="7.35"/><rect x="510.62" y="567.82" width="5.10" height="2.34"/><rect x="510.62" y="579.52" width="5.10" height="2.67"/><rect x="538.10" y="566.04" width="11.20" height="5.09"/><rect x="541.15" y="555.96" width="5.10" height="9.08"/><rect x="541.15" y="572.13" width="5.10" height="2.61"/><rect x="568.62" y="582.75" width="11.20" height="5.85"/><rect x="571.67" y="578.49" width="5.10" height="3.26"/><rect x="571.67" y="589.60" width="5.10" height="7.30"/><rect x="599.15" y="591.00" width="11.20" height="5.90"/><rect x="602.20" y="597.90" width="5.10" height="5.79"/><rect x="629.67" y="571.16" width="11.20" height="5.74"/><rect x="632.73" y="567.12" width="5.10" height="3.04"/><rect x="632.73" y="577.90" width="5.10" height="10.05"/><rect x="660.20" y="553.11" width="11.20" height="6.17"/><rect x="663.25" y="549.87" width="5.10" height="2.23"/><rect x="663.25" y="560.27" width="5.10" height="8.22"/><rect x="690.72" y="579.52" width="11.20" height="5.25"/><rect x="693.77" y="575.31" width="5.10" height="3.20"/><rect x="693.77" y="585.77" width="5.10" height="6.92"/><rect x="721.25" y="588.89" width="11.20" height="6.71"/><rect x="724.30" y="579.89" width="5.10" height="8.00"/><rect x="724.30" y="596.60" width="5.10" height="5.31"/><rect x="751.77" y="561.08" width="11.20" height="14.31"/><rect x="754.82" y="554.88" width="5.10" height="5.20"/><rect x="754.82" y="576.39" width="5.10" height="2.50"/><rect x="782.30" y="546.64" width="11.20" height="11.40"/><rect x="785.35" y="545.02" width="5.10" height="0.62"/><rect x="785.35" y="559.03" width="5.10" height="1.69"/></clipPath>
<g clip-path="url(#cp3)">
<polyline points="55.30,555.03 85.82,571.20 116.35,578.91 146.88,553.31 177.40,531.05 207.93,549.48 238.45,549.37 268.97,530.07 299.50,519.40 330.02,552.23 360.55,554.38 391.07,535.36 421.60,531.96 452.12,563.28 482.65,575.24 513.17,573.46 543.70,567.32 574.22,585.00 604.75,591.84 635.27,569.69 665.80,552.93 696.32,575.89 726.85,586.29 757.37,559.77 787.90,548.72" fill="none" stroke="#d21e1e" stroke-opacity="0.75" stroke-width="1.6" stroke-linejoin="round"/>
<polyline points="55.30,555.03 85.82,571.20 116.35,578.91 146.88,553.31 177.40,532.12 207.93,549.48 238.45,549.37 268.97,530.07 299.50,519.40 330.02,550.72 360.55,557.46 391.07,537.51 421.60,531.96 452.12,563.60 482.65,577.99 513.17,574.33 543.70,567.91 574.22,586.29 604.75,593.68 635.27,573.36 665.80,558.10 696.32,581.12 726.85,591.09 757.37,569.58 787.90,552.93" fill="none" stroke="#1e1eaa" stroke-opacity="0.75" stroke-width="1.6" stroke-linejoin="round"/>
</g>
<rect x="40.0" y="509.0" width="763.20" height="113.00" fill="none" stroke="#000" stroke-width="1"/>
<line x1="35.60" y1="609.20" x2="40.0" y2="609.20" stroke="#000" stroke-width="1"/>
<text x="24.64" y="613.60" font-size="10.35" textLength="6.36" lengthAdjust="spacingAndGlyphs" fill="#111">0</text>
<line x1="35.60" y1="582.25" x2="40.0" y2="582.25" stroke="#000" stroke-width="1"/>
<text x="24.64" y="586.65" font-size="10.35" textLength="6.36" lengthAdjust="spacingAndGlyphs" fill="#111">5</text>
<line x1="35.60" y1="555.30" x2="40.0" y2="555.30" stroke="#000" stroke-width="1"/>
<text x="18.27" y="559.70" font-size="10.35" textLength="12.76" lengthAdjust="spacingAndGlyphs" fill="#111">10</text>
<line x1="35.60" y1="528.35" x2="40.0" y2="528.35" stroke="#000" stroke-width="1"/>
<text x="18.27" y="532.75" font-size="10.35" textLength="12.76" lengthAdjust="spacingAndGlyphs" fill="#111">15</text>
<line x1="55.30" y1="622.0" x2="55.30" y2="626.40" stroke="#000" stroke-width="1"/>
<line x1="177.40" y1="622.0" x2="177.40" y2="626.40" stroke="#000" stroke-width="1"/>
<line x1="299.50" y1="622.0" x2="299.50" y2="626.40" stroke="#000" stroke-width="1"/>
<line x1="421.60" y1="622.0" x2="421.60" y2="626.40" stroke="#000" stroke-width="1"/>
<line x1="543.70" y1="622.0" x2="543.70" y2="626.40" stroke="#000" stroke-width="1"/>
<line x1="665.80" y1="622.0" x2="665.80" y2="626.40" stroke="#000" stroke-width="1"/>
<line x1="787.90" y1="622.0" x2="787.90" y2="626.40" stroke="#000" stroke-width="1"/>
<text x="40.00" y="504.50" font-size="12.32" textLength="125.03" lengthAdjust="spacingAndGlyphs" fill="#111">2m temperature (°C)</text>
</g>
<text x="45.51" y="638.80" font-size="10.35" textLength="19.58" lengthAdjust="spacingAndGlyphs" fill="#111">12Z</text>
<text x="39.26" y="650.60" font-size="10.35" textLength="32.12" lengthAdjust="spacingAndGlyphs" fill="#111">27Dec</text>
<text x="167.61" y="638.80" font-size="10.35" textLength="19.58" lengthAdjust="spacingAndGlyphs" fill="#111">12Z</text>
<text x="161.36" y="650.60" font-size="10.35" textLength="32.12" lengthAdjust="spacingAndGlyphs" fill="#111">28Dec</text>
<text x="289.71" y="638.80" font-size="10.35" textLength="19.58" lengthAdjust="spacingAndGlyphs" fill="#111">12Z</text>
<text x="283.46" y="650.60" font-size="10.35" textLength="32.12" lengthAdjust="spacingAndGlyphs" fill="#111">29Dec</text>
<text x="411.81" y="638.80" font-size="10.35" textLength="19.58" lengthAdjust="spacingAndGlyphs" fill="#111">12Z</text>
<text x="405.56" y="650.60" font-size="10.35" textLength="32.12" lengthAdjust="spacingAndGlyphs" fill="#111">30Dec</text>
<text x="533.91" y="638.80" font-size="10.35" textLength="19.58" lengthAdjust="spacingAndGlyphs" fill="#111">12Z</text>
<text x="527.66" y="650.60" font-size="10.35" textLength="32.12" lengthAdjust="spacingAndGlyphs" fill="#111">31Dec</text>
<text x="656.01" y="638.80" font-size="10.35" textLength="19.58" lengthAdjust="spacingAndGlyphs" fill="#111">12Z</text>
<text x="651.73" y="650.60" font-size="10.35" textLength="28.15" lengthAdjust="spacingAndGlyphs" fill="#111">01Jan</text>
<text x="778.11" y="638.80" font-size="10.35" textLength="19.58" lengthAdjust="spacingAndGlyphs" fill="#111">12Z</text>
<text x="773.83" y="650.60" font-size="10.35" textLength="28.15" lengthAdjust="spacingAndGlyphs" fill="#111">02Jan</text>
</svg></body></html>
